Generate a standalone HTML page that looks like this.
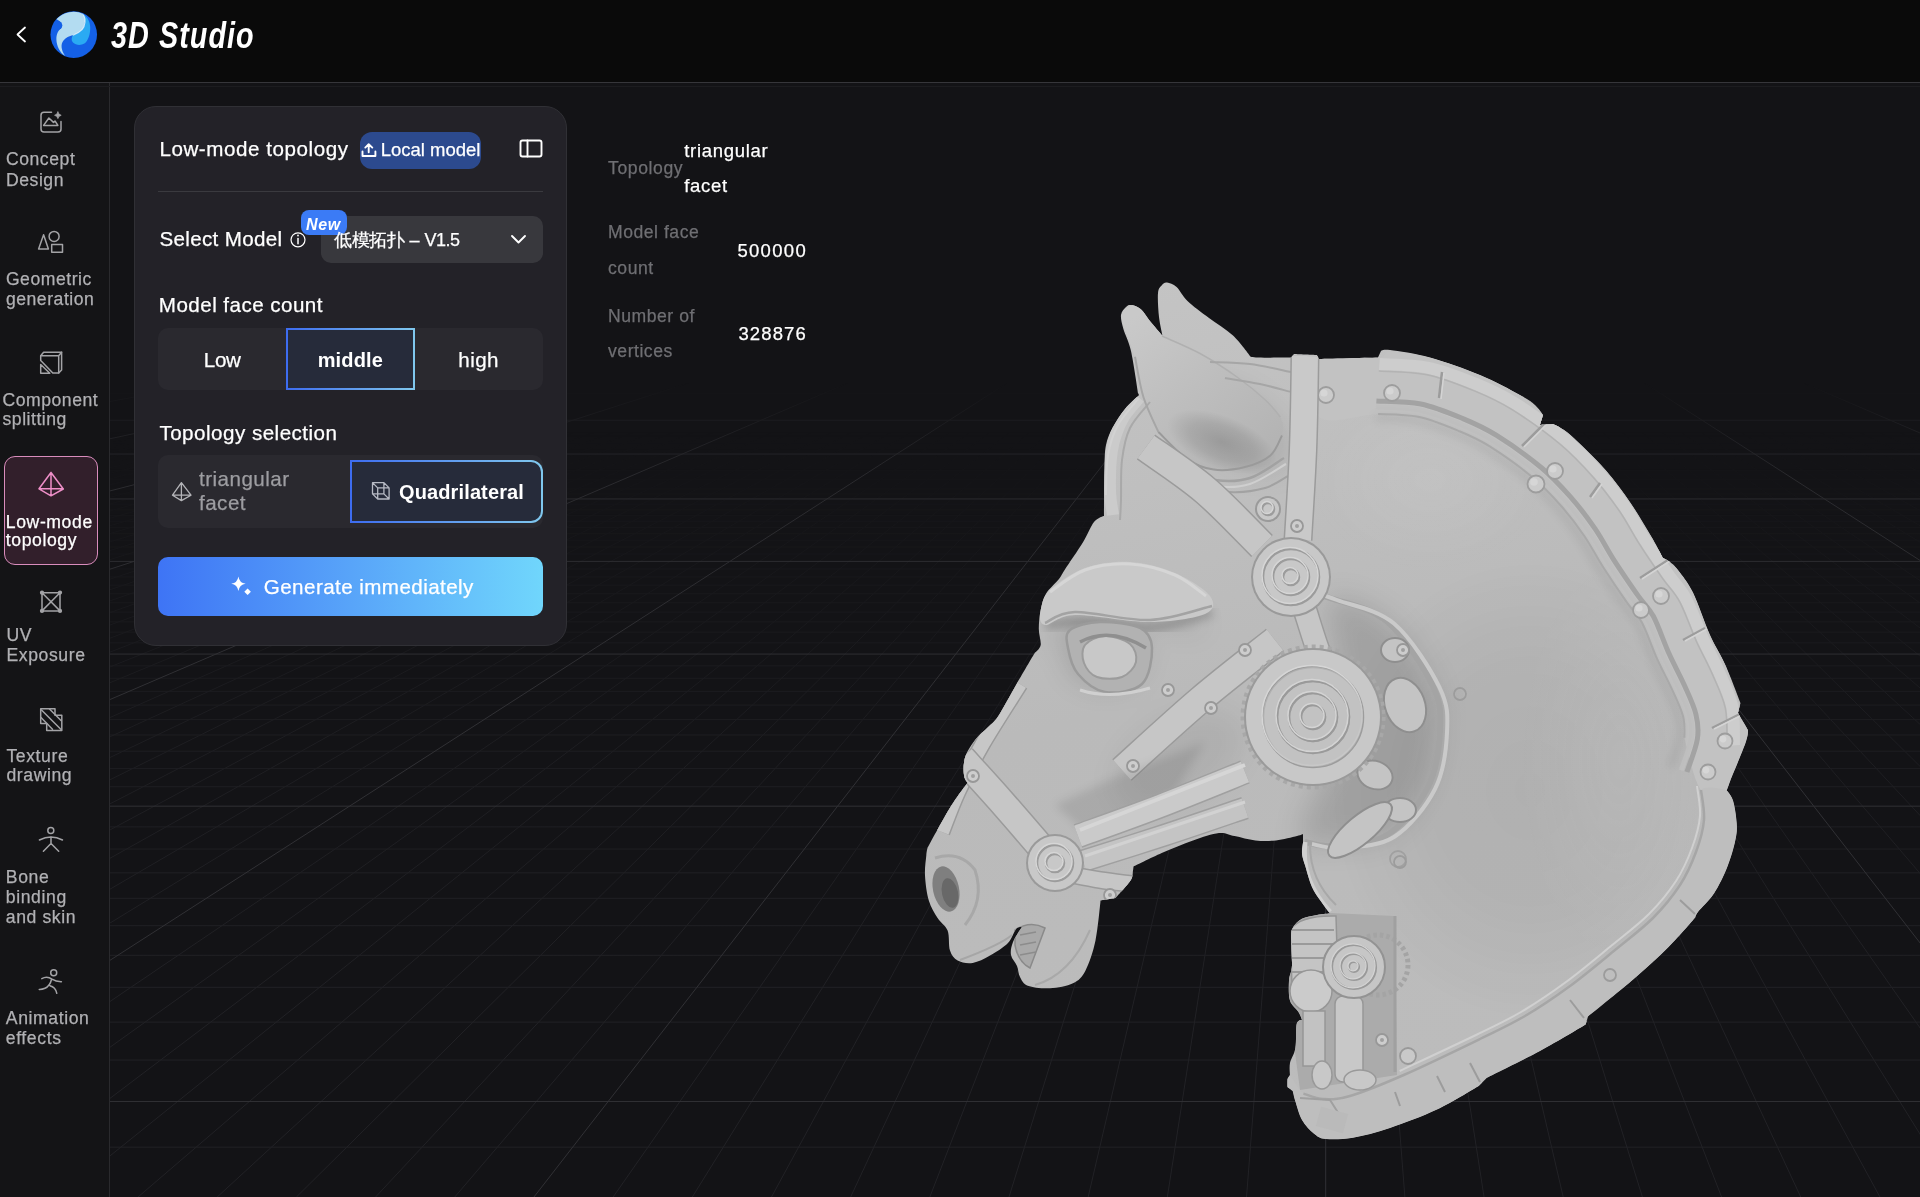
<!DOCTYPE html>
<html><head><meta charset="utf-8">
<style>
html,body{margin:0;padding:0;width:1920px;height:1197px;overflow:hidden;background:#131316;font-family:"Liberation Sans",sans-serif;}
.t{position:absolute;white-space:nowrap;-webkit-text-stroke:0.25px currentColor;}
.abs{position:absolute;}
#hdr{left:0;top:0;width:1920px;height:82px;background:#0a0a0a;border-bottom:1px solid #36363a;}
#side{left:0;top:83px;width:109px;height:1114px;background:#141416;border-right:1px solid #2a2a2d;}
#panel{left:134px;top:106px;width:431px;height:538px;background:#232228;border:1px solid #303035;border-radius:22px;box-sizing:border-box;width:433px;height:540px;}
#div1{left:158px;top:191px;width:385px;height:1px;background:#3a3a3f;}
#pill{left:360px;top:131.5px;width:121px;height:37px;border-radius:12px;background:#2c4a8e;}
#dd{left:321px;top:216px;width:222px;height:47px;border-radius:10px;background:#38383d;}
#newb{left:301px;top:209.5px;width:46px;height:25px;border-radius:8px;background:#3b7bf6;}
#seg{left:158px;top:328px;width:385px;height:62px;border-radius:10px;background:#2a292f;}
#mid{left:286px;top:328px;width:129px;height:62px;box-sizing:border-box;border:2px solid transparent;background:linear-gradient(#262b3a,#262b3a) padding-box,linear-gradient(90deg,#3d6cf0,#80c8ee) border-box;}
#tog{left:158px;top:455px;width:385px;height:73px;border-radius:10px;background:#2a292f;}
#quad{left:350px;top:460px;width:193px;height:63px;box-sizing:border-box;border:2px solid transparent;border-radius:0 12px 12px 0;background:linear-gradient(#262b3a,#262b3a) padding-box,linear-gradient(90deg,#3d6cf0,#80c8ee) border-box;}
#gen{left:158px;top:557px;width:385px;height:59px;border-radius:10px;background:linear-gradient(90deg,#3e74f5 0%,#58a4f9 50%,#70d6fc 100%);}
#act{left:4px;top:456px;width:94px;height:108.5px;box-sizing:border-box;border:1.7px solid #d98cbc;border-radius:11px;background:#321f2b;}
</style></head><body>
<div id="hdr" class="abs"></div>
<div id="side" class="abs"></div>
<div class="abs" style="left:0;top:86px;width:1920px;height:1px;background:#1c1c1f"></div>
<svg width="1920" height="1197" style="position:absolute;left:0;top:0">
<defs>
<linearGradient id="gfmin" x1="0" y1="0" x2="0" y2="1197" gradientUnits="userSpaceOnUse">
<stop offset="0.36" stop-color="#fff" stop-opacity="0"/><stop offset="0.62" stop-color="#fff" stop-opacity="0.75"/><stop offset="0.85" stop-color="#fff" stop-opacity="1"/>
</linearGradient>
<linearGradient id="gfmaj" x1="0" y1="0" x2="0" y2="1197" gradientUnits="userSpaceOnUse">
<stop offset="0.32" stop-color="#fff" stop-opacity="0"/><stop offset="0.40" stop-color="#fff" stop-opacity="0.8"/><stop offset="0.6" stop-color="#fff" stop-opacity="1"/>
</linearGradient>
<mask id="mmin"><rect x="0" y="0" width="1920" height="1197" fill="url(#gfmin)"/></mask>
<mask id="mmaj"><rect x="0" y="0" width="1920" height="1197" fill="url(#gfmaj)"/></mask>
<clipPath id="vclip"><rect x="110" y="83" width="1810" height="1114"/></clipPath>
</defs>
<g clip-path="url(#vclip)">
<g mask="url(#mmin)" stroke="#222226" stroke-width="1"><line x1="110" y1="396.18" x2="1920" y2="396.18"/><line x1="110" y1="398.61" x2="1920" y2="398.61"/><line x1="110" y1="401.10" x2="1920" y2="401.10"/><line x1="110" y1="403.64" x2="1920" y2="403.64"/><line x1="110" y1="406.25" x2="1920" y2="406.25"/><line x1="110" y1="408.91" x2="1920" y2="408.91"/><line x1="110" y1="411.64" x2="1920" y2="411.64"/><line x1="110" y1="414.43" x2="1920" y2="414.43"/><line x1="110" y1="417.29" x2="1920" y2="417.29"/><line x1="110" y1="423.23" x2="1920" y2="423.23"/><line x1="110" y1="426.31" x2="1920" y2="426.31"/><line x1="110" y1="429.47" x2="1920" y2="429.47"/><line x1="110" y1="432.71" x2="1920" y2="432.71"/><line x1="110" y1="436.03" x2="1920" y2="436.03"/><line x1="110" y1="439.45" x2="1920" y2="439.45"/><line x1="110" y1="442.95" x2="1920" y2="442.95"/><line x1="110" y1="446.55" x2="1920" y2="446.55"/><line x1="110" y1="450.26" x2="1920" y2="450.26"/><line x1="110" y1="457.98" x2="1920" y2="457.98"/><line x1="110" y1="462.00" x2="1920" y2="462.00"/><line x1="110" y1="466.15" x2="1920" y2="466.15"/><line x1="110" y1="470.42" x2="1920" y2="470.42"/><line x1="110" y1="474.81" x2="1920" y2="474.81"/><line x1="110" y1="479.35" x2="1920" y2="479.35"/><line x1="110" y1="484.02" x2="1920" y2="484.02"/><line x1="110" y1="488.84" x2="1920" y2="488.84"/><line x1="110" y1="493.82" x2="1920" y2="493.82"/><line x1="110" y1="504.26" x2="1920" y2="504.26"/><line x1="110" y1="509.75" x2="1920" y2="509.75"/><line x1="110" y1="515.43" x2="1920" y2="515.43"/><line x1="110" y1="521.30" x2="1920" y2="521.30"/><line x1="110" y1="527.39" x2="1920" y2="527.39"/><line x1="110" y1="533.69" x2="1920" y2="533.69"/><line x1="110" y1="540.23" x2="1920" y2="540.23"/><line x1="110" y1="547.01" x2="1920" y2="547.01"/><line x1="110" y1="554.06" x2="1920" y2="554.06"/><line x1="110" y1="568.98" x2="1920" y2="568.98"/><line x1="110" y1="576.90" x2="1920" y2="576.90"/><line x1="110" y1="585.15" x2="1920" y2="585.15"/><line x1="110" y1="593.75" x2="1920" y2="593.75"/><line x1="110" y1="602.71" x2="1920" y2="602.71"/><line x1="110" y1="612.08" x2="1920" y2="612.08"/><line x1="110" y1="621.87" x2="1920" y2="621.87"/><line x1="110" y1="632.11" x2="1920" y2="632.11"/><line x1="110" y1="642.83" x2="1920" y2="642.83"/><line x1="110" y1="665.88" x2="1920" y2="665.88"/><line x1="110" y1="678.29" x2="1920" y2="678.29"/><line x1="110" y1="691.35" x2="1920" y2="691.35"/><line x1="110" y1="705.11" x2="1920" y2="705.11"/><line x1="110" y1="719.62" x2="1920" y2="719.62"/><line x1="110" y1="734.97" x2="1920" y2="734.97"/><line x1="110" y1="751.20" x2="1920" y2="751.20"/><line x1="110" y1="768.42" x2="1920" y2="768.42"/><line x1="110" y1="786.70" x2="1920" y2="786.70"/><line x1="110" y1="826.90" x2="1920" y2="826.90"/><line x1="110" y1="849.06" x2="1920" y2="849.06"/><line x1="110" y1="872.80" x2="1920" y2="872.80"/><line x1="110" y1="898.27" x2="1920" y2="898.27"/><line x1="110" y1="925.69" x2="1920" y2="925.69"/><line x1="110" y1="955.28" x2="1920" y2="955.28"/><line x1="110" y1="987.32" x2="1920" y2="987.32"/><line x1="110" y1="1022.11" x2="1920" y2="1022.11"/><line x1="110" y1="1060.04" x2="1920" y2="1060.04"/><line x1="110" y1="1147.14" x2="1920" y2="1147.14"/><line x1="1325.7" y1="178" x2="-8096.28" y2="1197"/><line x1="1325.7" y1="178" x2="-8017.10" y2="1197"/><line x1="1325.7" y1="178" x2="-7937.93" y2="1197"/><line x1="1325.7" y1="178" x2="-7858.75" y2="1197"/><line x1="1325.7" y1="178" x2="-7779.57" y2="1197"/><line x1="1325.7" y1="178" x2="-7700.40" y2="1197"/><line x1="1325.7" y1="178" x2="-7621.22" y2="1197"/><line x1="1325.7" y1="178" x2="-7542.05" y2="1197"/><line x1="1325.7" y1="178" x2="-7462.87" y2="1197"/><line x1="1325.7" y1="178" x2="-7304.52" y2="1197"/><line x1="1325.7" y1="178" x2="-7225.34" y2="1197"/><line x1="1325.7" y1="178" x2="-7146.16" y2="1197"/><line x1="1325.7" y1="178" x2="-7066.99" y2="1197"/><line x1="1325.7" y1="178" x2="-6987.81" y2="1197"/><line x1="1325.7" y1="178" x2="-6908.64" y2="1197"/><line x1="1325.7" y1="178" x2="-6829.46" y2="1197"/><line x1="1325.7" y1="178" x2="-6750.28" y2="1197"/><line x1="1325.7" y1="178" x2="-6671.11" y2="1197"/><line x1="1325.7" y1="178" x2="-6512.75" y2="1197"/><line x1="1325.7" y1="178" x2="-6433.58" y2="1197"/><line x1="1325.7" y1="178" x2="-6354.40" y2="1197"/><line x1="1325.7" y1="178" x2="-6275.22" y2="1197"/><line x1="1325.7" y1="178" x2="-6196.05" y2="1197"/><line x1="1325.7" y1="178" x2="-6116.87" y2="1197"/><line x1="1325.7" y1="178" x2="-6037.70" y2="1197"/><line x1="1325.7" y1="178" x2="-5958.52" y2="1197"/><line x1="1325.7" y1="178" x2="-5879.34" y2="1197"/><line x1="1325.7" y1="178" x2="-5720.99" y2="1197"/><line x1="1325.7" y1="178" x2="-5641.81" y2="1197"/><line x1="1325.7" y1="178" x2="-5562.64" y2="1197"/><line x1="1325.7" y1="178" x2="-5483.46" y2="1197"/><line x1="1325.7" y1="178" x2="-5404.29" y2="1197"/><line x1="1325.7" y1="178" x2="-5325.11" y2="1197"/><line x1="1325.7" y1="178" x2="-5245.93" y2="1197"/><line x1="1325.7" y1="178" x2="-5166.76" y2="1197"/><line x1="1325.7" y1="178" x2="-5087.58" y2="1197"/><line x1="1325.7" y1="178" x2="-4929.23" y2="1197"/><line x1="1325.7" y1="178" x2="-4850.05" y2="1197"/><line x1="1325.7" y1="178" x2="-4770.88" y2="1197"/><line x1="1325.7" y1="178" x2="-4691.70" y2="1197"/><line x1="1325.7" y1="178" x2="-4612.52" y2="1197"/><line x1="1325.7" y1="178" x2="-4533.35" y2="1197"/><line x1="1325.7" y1="178" x2="-4454.17" y2="1197"/><line x1="1325.7" y1="178" x2="-4374.99" y2="1197"/><line x1="1325.7" y1="178" x2="-4295.82" y2="1197"/><line x1="1325.7" y1="178" x2="-4137.46" y2="1197"/><line x1="1325.7" y1="178" x2="-4058.29" y2="1197"/><line x1="1325.7" y1="178" x2="-3979.11" y2="1197"/><line x1="1325.7" y1="178" x2="-3899.94" y2="1197"/><line x1="1325.7" y1="178" x2="-3820.76" y2="1197"/><line x1="1325.7" y1="178" x2="-3741.58" y2="1197"/><line x1="1325.7" y1="178" x2="-3662.41" y2="1197"/><line x1="1325.7" y1="178" x2="-3583.23" y2="1197"/><line x1="1325.7" y1="178" x2="-3504.05" y2="1197"/><line x1="1325.7" y1="178" x2="-3345.70" y2="1197"/><line x1="1325.7" y1="178" x2="-3266.53" y2="1197"/><line x1="1325.7" y1="178" x2="-3187.35" y2="1197"/><line x1="1325.7" y1="178" x2="-3108.17" y2="1197"/><line x1="1325.7" y1="178" x2="-3029.00" y2="1197"/><line x1="1325.7" y1="178" x2="-2949.82" y2="1197"/><line x1="1325.7" y1="178" x2="-2870.64" y2="1197"/><line x1="1325.7" y1="178" x2="-2791.47" y2="1197"/><line x1="1325.7" y1="178" x2="-2712.29" y2="1197"/><line x1="1325.7" y1="178" x2="-2553.94" y2="1197"/><line x1="1325.7" y1="178" x2="-2474.76" y2="1197"/><line x1="1325.7" y1="178" x2="-2395.59" y2="1197"/><line x1="1325.7" y1="178" x2="-2316.41" y2="1197"/><line x1="1325.7" y1="178" x2="-2237.23" y2="1197"/><line x1="1325.7" y1="178" x2="-2158.06" y2="1197"/><line x1="1325.7" y1="178" x2="-2078.88" y2="1197"/><line x1="1325.7" y1="178" x2="-1999.70" y2="1197"/><line x1="1325.7" y1="178" x2="-1920.53" y2="1197"/><line x1="1325.7" y1="178" x2="-1762.18" y2="1197"/><line x1="1325.7" y1="178" x2="-1683.00" y2="1197"/><line x1="1325.7" y1="178" x2="-1603.82" y2="1197"/><line x1="1325.7" y1="178" x2="-1524.65" y2="1197"/><line x1="1325.7" y1="178" x2="-1445.47" y2="1197"/><line x1="1325.7" y1="178" x2="-1366.29" y2="1197"/><line x1="1325.7" y1="178" x2="-1287.12" y2="1197"/><line x1="1325.7" y1="178" x2="-1207.94" y2="1197"/><line x1="1325.7" y1="178" x2="-1128.77" y2="1197"/><line x1="1325.7" y1="178" x2="-970.41" y2="1197"/><line x1="1325.7" y1="178" x2="-891.24" y2="1197"/><line x1="1325.7" y1="178" x2="-812.06" y2="1197"/><line x1="1325.7" y1="178" x2="-732.88" y2="1197"/><line x1="1325.7" y1="178" x2="-653.71" y2="1197"/><line x1="1325.7" y1="178" x2="-574.53" y2="1197"/><line x1="1325.7" y1="178" x2="-495.35" y2="1197"/><line x1="1325.7" y1="178" x2="-416.18" y2="1197"/><line x1="1325.7" y1="178" x2="-337.00" y2="1197"/><line x1="1325.7" y1="178" x2="-178.65" y2="1197"/><line x1="1325.7" y1="178" x2="-99.47" y2="1197"/><line x1="1325.7" y1="178" x2="-20.30" y2="1197"/><line x1="1325.7" y1="178" x2="58.88" y2="1197"/><line x1="1325.7" y1="178" x2="138.06" y2="1197"/><line x1="1325.7" y1="178" x2="217.23" y2="1197"/><line x1="1325.7" y1="178" x2="296.41" y2="1197"/><line x1="1325.7" y1="178" x2="375.58" y2="1197"/><line x1="1325.7" y1="178" x2="454.76" y2="1197"/><line x1="1325.7" y1="178" x2="613.11" y2="1197"/><line x1="1325.7" y1="178" x2="692.29" y2="1197"/><line x1="1325.7" y1="178" x2="771.47" y2="1197"/><line x1="1325.7" y1="178" x2="850.64" y2="1197"/><line x1="1325.7" y1="178" x2="929.82" y2="1197"/><line x1="1325.7" y1="178" x2="1008.99" y2="1197"/><line x1="1325.7" y1="178" x2="1088.17" y2="1197"/><line x1="1325.7" y1="178" x2="1167.35" y2="1197"/><line x1="1325.7" y1="178" x2="1246.52" y2="1197"/><line x1="1325.7" y1="178" x2="1404.88" y2="1197"/><line x1="1325.7" y1="178" x2="1484.05" y2="1197"/><line x1="1325.7" y1="178" x2="1563.23" y2="1197"/><line x1="1325.7" y1="178" x2="1642.41" y2="1197"/><line x1="1325.7" y1="178" x2="1721.58" y2="1197"/><line x1="1325.7" y1="178" x2="1800.76" y2="1197"/><line x1="1325.7" y1="178" x2="1879.93" y2="1197"/><line x1="1325.7" y1="178" x2="1959.11" y2="1197"/><line x1="1325.7" y1="178" x2="2038.29" y2="1197"/><line x1="1325.7" y1="178" x2="2196.64" y2="1197"/><line x1="1325.7" y1="178" x2="2275.82" y2="1197"/><line x1="1325.7" y1="178" x2="2354.99" y2="1197"/><line x1="1325.7" y1="178" x2="2434.17" y2="1197"/><line x1="1325.7" y1="178" x2="2513.34" y2="1197"/><line x1="1325.7" y1="178" x2="2592.52" y2="1197"/><line x1="1325.7" y1="178" x2="2671.70" y2="1197"/><line x1="1325.7" y1="178" x2="2750.87" y2="1197"/><line x1="1325.7" y1="178" x2="2830.05" y2="1197"/><line x1="1325.7" y1="178" x2="2988.40" y2="1197"/><line x1="1325.7" y1="178" x2="3067.58" y2="1197"/><line x1="1325.7" y1="178" x2="3146.75" y2="1197"/><line x1="1325.7" y1="178" x2="3225.93" y2="1197"/><line x1="1325.7" y1="178" x2="3305.11" y2="1197"/><line x1="1325.7" y1="178" x2="3384.28" y2="1197"/><line x1="1325.7" y1="178" x2="3463.46" y2="1197"/><line x1="1325.7" y1="178" x2="3542.64" y2="1197"/><line x1="1325.7" y1="178" x2="3621.81" y2="1197"/><line x1="1325.7" y1="178" x2="3780.17" y2="1197"/><line x1="1325.7" y1="178" x2="3859.34" y2="1197"/><line x1="1325.7" y1="178" x2="3938.52" y2="1197"/><line x1="1325.7" y1="178" x2="4017.69" y2="1197"/><line x1="1325.7" y1="178" x2="4096.87" y2="1197"/><line x1="1325.7" y1="178" x2="4176.05" y2="1197"/><line x1="1325.7" y1="178" x2="4255.22" y2="1197"/><line x1="1325.7" y1="178" x2="4334.40" y2="1197"/><line x1="1325.7" y1="178" x2="4413.58" y2="1197"/><line x1="1325.7" y1="178" x2="4571.93" y2="1197"/><line x1="1325.7" y1="178" x2="4651.10" y2="1197"/><line x1="1325.7" y1="178" x2="4730.28" y2="1197"/><line x1="1325.7" y1="178" x2="4809.46" y2="1197"/><line x1="1325.7" y1="178" x2="4888.63" y2="1197"/><line x1="1325.7" y1="178" x2="4967.81" y2="1197"/><line x1="1325.7" y1="178" x2="5046.99" y2="1197"/><line x1="1325.7" y1="178" x2="5126.16" y2="1197"/><line x1="1325.7" y1="178" x2="5205.34" y2="1197"/><line x1="1325.7" y1="178" x2="5363.69" y2="1197"/><line x1="1325.7" y1="178" x2="5442.87" y2="1197"/><line x1="1325.7" y1="178" x2="5522.04" y2="1197"/><line x1="1325.7" y1="178" x2="5601.22" y2="1197"/><line x1="1325.7" y1="178" x2="5680.40" y2="1197"/><line x1="1325.7" y1="178" x2="5759.57" y2="1197"/><line x1="1325.7" y1="178" x2="5838.75" y2="1197"/><line x1="1325.7" y1="178" x2="5917.93" y2="1197"/><line x1="1325.7" y1="178" x2="5997.10" y2="1197"/><line x1="1325.7" y1="178" x2="6155.45" y2="1197"/><line x1="1325.7" y1="178" x2="6234.63" y2="1197"/><line x1="1325.7" y1="178" x2="6313.81" y2="1197"/><line x1="1325.7" y1="178" x2="6392.98" y2="1197"/><line x1="1325.7" y1="178" x2="6472.16" y2="1197"/><line x1="1325.7" y1="178" x2="6551.34" y2="1197"/><line x1="1325.7" y1="178" x2="6630.51" y2="1197"/><line x1="1325.7" y1="178" x2="6709.69" y2="1197"/><line x1="1325.7" y1="178" x2="6788.86" y2="1197"/><line x1="1325.7" y1="178" x2="6947.22" y2="1197"/><line x1="1325.7" y1="178" x2="7026.39" y2="1197"/><line x1="1325.7" y1="178" x2="7105.57" y2="1197"/><line x1="1325.7" y1="178" x2="7184.75" y2="1197"/><line x1="1325.7" y1="178" x2="7263.92" y2="1197"/><line x1="1325.7" y1="178" x2="7343.10" y2="1197"/><line x1="1325.7" y1="178" x2="7422.28" y2="1197"/><line x1="1325.7" y1="178" x2="7501.45" y2="1197"/><line x1="1325.7" y1="178" x2="7580.63" y2="1197"/><line x1="1325.7" y1="178" x2="7738.98" y2="1197"/><line x1="1325.7" y1="178" x2="7818.16" y2="1197"/><line x1="1325.7" y1="178" x2="7897.33" y2="1197"/><line x1="1325.7" y1="178" x2="7976.51" y2="1197"/><line x1="1325.7" y1="178" x2="8055.69" y2="1197"/><line x1="1325.7" y1="178" x2="8134.86" y2="1197"/><line x1="1325.7" y1="178" x2="8214.04" y2="1197"/><line x1="1325.7" y1="178" x2="8293.21" y2="1197"/><line x1="1325.7" y1="178" x2="8372.39" y2="1197"/><line x1="1325.7" y1="178" x2="8530.74" y2="1197"/><line x1="1325.7" y1="178" x2="8609.92" y2="1197"/><line x1="1325.7" y1="178" x2="8689.10" y2="1197"/><line x1="1325.7" y1="178" x2="8768.27" y2="1197"/><line x1="1325.7" y1="178" x2="8847.45" y2="1197"/><line x1="1325.7" y1="178" x2="8926.62" y2="1197"/><line x1="1325.7" y1="178" x2="9005.80" y2="1197"/><line x1="1325.7" y1="178" x2="9084.98" y2="1197"/><line x1="1325.7" y1="178" x2="9164.15" y2="1197"/><line x1="1325.7" y1="178" x2="9322.51" y2="1197"/><line x1="1325.7" y1="178" x2="9401.68" y2="1197"/><line x1="1325.7" y1="178" x2="9480.86" y2="1197"/><line x1="1325.7" y1="178" x2="9560.04" y2="1197"/><line x1="1325.7" y1="178" x2="9639.21" y2="1197"/><line x1="1325.7" y1="178" x2="9718.39" y2="1197"/><line x1="1325.7" y1="178" x2="9797.56" y2="1197"/><line x1="1325.7" y1="178" x2="9876.74" y2="1197"/><line x1="1325.7" y1="178" x2="9955.92" y2="1197"/><line x1="1325.7" y1="178" x2="10114.27" y2="1197"/><line x1="1325.7" y1="178" x2="10193.45" y2="1197"/><line x1="1325.7" y1="178" x2="10272.62" y2="1197"/><line x1="1325.7" y1="178" x2="10351.80" y2="1197"/><line x1="1325.7" y1="178" x2="10430.97" y2="1197"/><line x1="1325.7" y1="178" x2="10510.15" y2="1197"/><line x1="1325.7" y1="178" x2="10589.33" y2="1197"/><line x1="1325.7" y1="178" x2="10668.50" y2="1197"/><line x1="1325.7" y1="178" x2="10747.68" y2="1197"/></g><g mask="url(#mmaj)" stroke="#313135" stroke-width="1"><line x1="110" y1="393.80" x2="1920" y2="393.80"/><line x1="110" y1="420.22" x2="1920" y2="420.22"/><line x1="110" y1="454.06" x2="1920" y2="454.06"/><line x1="110" y1="498.95" x2="1920" y2="498.95"/><line x1="110" y1="561.38" x2="1920" y2="561.38"/><line x1="110" y1="654.08" x2="1920" y2="654.08"/><line x1="110" y1="806.16" x2="1920" y2="806.16"/><line x1="110" y1="1101.54" x2="1920" y2="1101.54"/><line x1="1325.7" y1="178" x2="-8175.46" y2="1197"/><line x1="1325.7" y1="178" x2="-7383.69" y2="1197"/><line x1="1325.7" y1="178" x2="-6591.93" y2="1197"/><line x1="1325.7" y1="178" x2="-5800.17" y2="1197"/><line x1="1325.7" y1="178" x2="-5008.40" y2="1197"/><line x1="1325.7" y1="178" x2="-4216.64" y2="1197"/><line x1="1325.7" y1="178" x2="-3424.88" y2="1197"/><line x1="1325.7" y1="178" x2="-2633.11" y2="1197"/><line x1="1325.7" y1="178" x2="-1841.35" y2="1197"/><line x1="1325.7" y1="178" x2="-1049.59" y2="1197"/><line x1="1325.7" y1="178" x2="-257.83" y2="1197"/><line x1="1325.7" y1="178" x2="533.94" y2="1197"/><line x1="1325.7" y1="178" x2="1325.70" y2="1197"/><line x1="1325.7" y1="178" x2="2117.46" y2="1197"/><line x1="1325.7" y1="178" x2="2909.23" y2="1197"/><line x1="1325.7" y1="178" x2="3700.99" y2="1197"/><line x1="1325.7" y1="178" x2="4492.75" y2="1197"/><line x1="1325.7" y1="178" x2="5284.52" y2="1197"/><line x1="1325.7" y1="178" x2="6076.28" y2="1197"/><line x1="1325.7" y1="178" x2="6868.04" y2="1197"/><line x1="1325.7" y1="178" x2="7659.80" y2="1197"/><line x1="1325.7" y1="178" x2="8451.57" y2="1197"/><line x1="1325.7" y1="178" x2="9243.33" y2="1197"/><line x1="1325.7" y1="178" x2="10035.09" y2="1197"/><line x1="1325.7" y1="178" x2="10826.86" y2="1197"/></g>
</g>
</svg>
<svg width="1920" height="1197" style="position:absolute;left:0;top:0">
<defs>
<clipPath id="hclip"><path d="M1121.0,315.0 C1121.4,311.3 1124.3,308.7 1126.0,307.0 C1127.7,305.3 1128.6,304.7 1131.0,305.0 C1133.4,305.3 1137.2,306.0 1140.6,309.0 C1144.0,312.0 1147.9,318.6 1151.6,323.0 C1155.2,327.4 1162.5,335.6 1162.5,335.6 C1162.5,335.6 1159.8,324.1 1159.0,317.0 C1158.2,309.9 1157.5,298.3 1158.0,293.0 C1158.5,287.7 1160.5,286.8 1162.0,285.0 C1163.5,283.2 1164.6,282.2 1167.0,282.5 C1169.4,282.8 1173.2,283.9 1176.6,287.0 C1180.0,290.1 1182.1,295.8 1187.5,301.0 C1192.9,306.2 1201.4,312.2 1209.0,318.0 C1216.6,323.8 1226.2,329.3 1233.0,335.6 C1239.8,341.9 1250.0,356.0 1250.0,356.0 C1250.0,356.0 1249.2,357.2 1256.0,357.5 C1262.8,357.8 1291.0,357.5 1291.0,357.5 C1291.0,357.5 1294.0,354.0 1294.0,354.0 C1294.0,354.0 1317.0,355.0 1317.0,355.0 C1317.0,355.0 1319.0,359.0 1319.0,359.0 C1319.0,359.0 1378.0,357.5 1378.0,357.5 C1378.0,357.5 1381.0,351.0 1381.0,351.0 C1381.0,351.0 1381.8,348.9 1390.0,350.0 C1398.2,351.1 1415.0,353.3 1430.0,357.5 C1445.0,361.7 1465.0,368.8 1480.0,375.0 C1495.0,381.2 1510.8,390.0 1520.0,395.0 C1529.2,400.0 1531.2,401.7 1535.0,405.0 C1538.8,408.3 1543.0,415.0 1543.0,415.0 C1543.0,415.0 1540.0,425.0 1540.0,425.0 C1540.0,425.0 1553.0,424.0 1553.0,424.0 C1553.0,424.0 1561.7,427.3 1570.5,435.0 C1579.3,442.7 1595.6,458.7 1605.6,470.0 C1615.6,481.3 1623.1,492.1 1630.6,503.0 C1638.1,513.9 1645.3,526.3 1650.7,535.5 C1656.1,544.7 1663.0,558.0 1663.0,558.0 C1663.0,558.0 1667.5,560.0 1670.0,562.0 C1672.5,564.0 1674.2,564.9 1678.0,570.0 C1681.8,575.1 1687.7,581.8 1693.0,592.6 C1698.3,603.4 1704.6,622.9 1710.0,635.0 C1715.4,647.1 1720.3,653.7 1725.4,665.0 C1730.5,676.3 1740.5,703.0 1740.5,703.0 C1740.5,703.0 1738.0,713.0 1738.0,713.0 C1738.0,713.0 1748.0,730.0 1748.0,730.0 C1748.0,730.0 1748.4,734.6 1745.5,743.0 C1742.6,751.4 1733.5,772.6 1730.4,780.5 C1727.3,788.4 1726.7,790.6 1726.7,790.6 C1726.7,790.6 1731.3,795.2 1733.0,800.6 C1734.7,806.0 1736.3,816.4 1736.7,823.0 C1737.1,829.6 1737.0,832.7 1735.4,840.0 C1733.9,847.3 1731.0,857.8 1727.4,866.7 C1723.8,875.6 1718.9,886.0 1714.0,893.5 C1709.1,901.0 1701.1,908.0 1698.0,912.0 C1694.9,916.0 1695.3,917.5 1695.3,917.5 C1695.3,917.5 1678.8,936.8 1668.6,947.0 C1658.3,957.2 1647.2,967.4 1633.8,979.0 C1620.4,990.6 1588.0,1016.5 1588.0,1016.5 C1588.0,1016.5 1585.7,1024.5 1585.7,1024.5 C1585.7,1024.5 1556.5,1042.1 1540.0,1051.0 C1523.5,1059.9 1486.7,1078.0 1486.7,1078.0 C1486.7,1078.0 1478.7,1086.0 1478.7,1086.0 C1478.7,1086.0 1451.8,1102.6 1437.0,1109.6 C1422.2,1116.6 1404.0,1123.3 1390.0,1128.0 C1376.0,1132.7 1363.7,1135.9 1353.0,1137.7 C1342.3,1139.5 1332.5,1139.7 1326.0,1139.0 C1319.5,1138.3 1318.0,1136.9 1314.0,1133.7 C1310.0,1130.5 1305.1,1125.3 1302.0,1120.0 C1298.9,1114.7 1297.0,1106.4 1295.4,1101.6 C1293.9,1096.8 1292.7,1091.0 1292.7,1091.0 C1292.7,1091.0 1287.4,1087.0 1287.4,1087.0 C1287.4,1087.0 1287.4,1079.0 1287.4,1079.0 C1287.4,1079.0 1290.0,1075.0 1290.0,1075.0 C1290.0,1075.0 1289.1,1067.5 1290.0,1063.0 C1290.9,1058.5 1294.3,1054.5 1295.4,1048.0 C1296.5,1041.5 1295.6,1028.7 1296.7,1024.0 C1297.8,1019.3 1302.0,1020.0 1302.0,1020.0 C1302.0,1020.0 1300.5,1015.2 1298.5,1012.0 C1296.5,1008.8 1291.6,1005.9 1290.0,1000.6 C1288.4,995.4 1288.7,986.4 1289.0,980.5 C1289.3,974.6 1291.7,972.8 1292.0,965.5 C1292.3,958.2 1290.8,943.4 1291.0,937.0 C1291.2,930.6 1291.6,930.0 1293.4,927.0 C1295.2,924.0 1298.1,920.7 1302.0,918.7 C1305.9,916.7 1312.3,915.9 1317.0,915.0 C1321.7,914.1 1330.0,913.6 1330.0,913.6 C1330.0,913.6 1323.0,904.4 1320.0,900.0 C1317.0,895.6 1314.5,892.8 1312.0,887.0 C1309.5,881.2 1306.7,870.6 1305.0,865.0 C1303.3,859.4 1302.3,857.1 1302.0,853.4 C1301.7,849.6 1303.0,842.5 1303.0,842.5 C1303.0,842.5 1303.0,834.0 1303.0,834.0 C1303.0,834.0 1301.5,834.9 1297.0,836.0 C1292.5,837.1 1282.9,839.7 1276.0,840.4 C1269.1,841.1 1262.3,841.1 1255.4,840.4 C1248.5,839.7 1240.7,837.2 1234.6,836.0 C1228.5,834.8 1225.9,832.3 1219.0,833.0 C1212.1,833.7 1202.5,837.1 1193.0,840.4 C1183.5,843.7 1171.6,848.6 1161.7,853.0 C1151.8,857.4 1133.5,866.5 1133.5,866.5 C1133.5,866.5 1133.5,868.1 1133.0,870.4 C1132.5,872.7 1133.4,875.9 1130.5,880.5 C1127.6,885.1 1115.5,898.0 1115.5,898.0 C1115.5,898.0 1100.5,900.5 1100.5,900.5 C1100.5,900.5 1098.0,928.9 1095.5,940.6 C1093.0,952.3 1089.2,963.6 1085.4,970.7 C1081.7,977.8 1078.9,980.3 1073.0,983.2 C1067.1,986.1 1057.5,987.8 1050.0,988.2 C1042.5,988.6 1032.8,987.6 1027.8,985.7 C1022.8,983.8 1021.8,980.3 1020.0,977.0 C1018.2,973.7 1018.5,969.7 1017.0,966.0 C1015.5,962.3 1011.7,959.0 1011.0,955.0 C1010.3,951.0 1011.2,946.7 1013.0,942.0 C1014.8,937.3 1022.0,927.0 1022.0,927.0 C1022.0,927.0 1018.3,926.3 1016.0,929.0 C1013.7,931.7 1012.3,938.6 1008.0,943.0 C1003.7,947.4 995.9,952.3 990.0,955.6 C984.1,958.9 978.1,962.2 972.7,963.0 C967.3,963.8 961.4,962.7 957.6,960.6 C953.8,958.5 951.7,955.6 950.0,950.6 C948.3,945.6 949.7,936.0 947.6,930.6 C945.5,925.2 940.7,923.0 937.6,918.0 C934.5,913.0 930.9,907.6 928.8,900.5 C926.7,893.4 925.4,882.9 925.0,875.4 C924.6,867.9 925.9,860.0 926.3,855.4 C926.7,850.8 927.5,848.0 927.5,848.0 C927.5,848.0 943.3,818.7 950.0,807.8 C956.7,796.9 967.6,782.7 967.6,782.7 C967.6,782.7 964.4,779.2 964.0,775.0 C963.6,770.8 963.2,763.4 965.0,757.6 C966.8,751.8 971.2,745.0 975.0,740.0 C978.8,735.0 983.8,731.6 987.7,727.6 C991.6,723.6 993.5,723.3 998.4,716.0 C1003.2,708.7 1010.7,694.4 1016.8,683.8 C1022.9,673.2 1035.0,652.6 1035.0,652.6 C1035.0,652.6 1040.1,649.0 1040.7,645.0 C1041.3,641.0 1038.8,634.5 1038.8,628.7 C1038.8,622.9 1039.5,615.8 1040.7,610.0 C1041.9,604.2 1043.0,598.9 1046.0,593.8 C1049.0,588.6 1055.9,583.0 1059.0,579.0 C1062.1,575.0 1060.6,576.1 1064.6,570.0 C1068.6,563.9 1078.1,550.3 1083.0,542.3 C1087.9,534.3 1090.5,526.4 1094.0,522.0 C1097.5,517.6 1104.0,516.0 1104.0,516.0 C1104.0,516.0 1103.9,513.0 1104.0,505.0 C1104.1,496.9 1104.2,477.7 1104.5,467.7 C1104.8,457.7 1104.6,451.7 1106.0,445.0 C1107.4,438.3 1109.5,433.6 1112.7,427.6 C1115.9,421.6 1120.6,414.4 1125.0,409.0 C1129.4,403.6 1139.0,395.0 1139.0,395.0 C1139.0,395.0 1138.0,393.0 1138.0,393.0 C1138.0,393.0 1133.4,361.7 1131.0,351.0 C1128.6,340.3 1125.1,335.0 1123.4,329.0 C1121.7,323.0 1120.6,318.7 1121.0,315.0 Z"/></clipPath>
<filter id="hblur" x="-20%" y="-20%" width="140%" height="140%"><feGaussianBlur stdDeviation="14"/></filter><filter id="sblur" x="-20%" y="-20%" width="140%" height="140%"><feGaussianBlur stdDeviation="4"/></filter>
<radialGradient id="rdark"><stop offset="0" stop-color="#000" stop-opacity="0.055"/><stop offset="0.55" stop-color="#000" stop-opacity="0.04"/><stop offset="1" stop-color="#000" stop-opacity="0"/></radialGradient>
<radialGradient id="rlight"><stop offset="0" stop-color="#fff" stop-opacity="0.07"/><stop offset="1" stop-color="#fff" stop-opacity="0"/></radialGradient>
<radialGradient id="rlight2"><stop offset="0" stop-color="#fff" stop-opacity="0.05"/><stop offset="1" stop-color="#fff" stop-opacity="0"/></radialGradient>
<linearGradient id="earg" x1="1130" y1="320" x2="1250" y2="460" gradientUnits="userSpaceOnUse"><stop offset="0" stop-color="#c9c9c9"/><stop offset="0.55" stop-color="#bdbdbd"/><stop offset="1" stop-color="#b4b4b4"/></linearGradient>
<radialGradient id="eardark"><stop offset="0" stop-color="#000" stop-opacity="0.16"/><stop offset="0.6" stop-color="#000" stop-opacity="0.09"/><stop offset="1" stop-color="#000" stop-opacity="0"/></radialGradient>
<linearGradient id="hbase" x1="1100" y1="280" x2="1300" y2="1100" gradientUnits="userSpaceOnUse">
<stop offset="0" stop-color="#c4c4c4"/><stop offset="0.5" stop-color="#bababa"/><stop offset="1" stop-color="#bcbcbc"/>
</linearGradient>
</defs>
<path fill="url(#hbase)" d="M1121.0,315.0 C1121.4,311.3 1124.3,308.7 1126.0,307.0 C1127.7,305.3 1128.6,304.7 1131.0,305.0 C1133.4,305.3 1137.2,306.0 1140.6,309.0 C1144.0,312.0 1147.9,318.6 1151.6,323.0 C1155.2,327.4 1162.5,335.6 1162.5,335.6 C1162.5,335.6 1159.8,324.1 1159.0,317.0 C1158.2,309.9 1157.5,298.3 1158.0,293.0 C1158.5,287.7 1160.5,286.8 1162.0,285.0 C1163.5,283.2 1164.6,282.2 1167.0,282.5 C1169.4,282.8 1173.2,283.9 1176.6,287.0 C1180.0,290.1 1182.1,295.8 1187.5,301.0 C1192.9,306.2 1201.4,312.2 1209.0,318.0 C1216.6,323.8 1226.2,329.3 1233.0,335.6 C1239.8,341.9 1250.0,356.0 1250.0,356.0 C1250.0,356.0 1249.2,357.2 1256.0,357.5 C1262.8,357.8 1291.0,357.5 1291.0,357.5 C1291.0,357.5 1294.0,354.0 1294.0,354.0 C1294.0,354.0 1317.0,355.0 1317.0,355.0 C1317.0,355.0 1319.0,359.0 1319.0,359.0 C1319.0,359.0 1378.0,357.5 1378.0,357.5 C1378.0,357.5 1381.0,351.0 1381.0,351.0 C1381.0,351.0 1381.8,348.9 1390.0,350.0 C1398.2,351.1 1415.0,353.3 1430.0,357.5 C1445.0,361.7 1465.0,368.8 1480.0,375.0 C1495.0,381.2 1510.8,390.0 1520.0,395.0 C1529.2,400.0 1531.2,401.7 1535.0,405.0 C1538.8,408.3 1543.0,415.0 1543.0,415.0 C1543.0,415.0 1540.0,425.0 1540.0,425.0 C1540.0,425.0 1553.0,424.0 1553.0,424.0 C1553.0,424.0 1561.7,427.3 1570.5,435.0 C1579.3,442.7 1595.6,458.7 1605.6,470.0 C1615.6,481.3 1623.1,492.1 1630.6,503.0 C1638.1,513.9 1645.3,526.3 1650.7,535.5 C1656.1,544.7 1663.0,558.0 1663.0,558.0 C1663.0,558.0 1667.5,560.0 1670.0,562.0 C1672.5,564.0 1674.2,564.9 1678.0,570.0 C1681.8,575.1 1687.7,581.8 1693.0,592.6 C1698.3,603.4 1704.6,622.9 1710.0,635.0 C1715.4,647.1 1720.3,653.7 1725.4,665.0 C1730.5,676.3 1740.5,703.0 1740.5,703.0 C1740.5,703.0 1738.0,713.0 1738.0,713.0 C1738.0,713.0 1748.0,730.0 1748.0,730.0 C1748.0,730.0 1748.4,734.6 1745.5,743.0 C1742.6,751.4 1733.5,772.6 1730.4,780.5 C1727.3,788.4 1726.7,790.6 1726.7,790.6 C1726.7,790.6 1731.3,795.2 1733.0,800.6 C1734.7,806.0 1736.3,816.4 1736.7,823.0 C1737.1,829.6 1737.0,832.7 1735.4,840.0 C1733.9,847.3 1731.0,857.8 1727.4,866.7 C1723.8,875.6 1718.9,886.0 1714.0,893.5 C1709.1,901.0 1701.1,908.0 1698.0,912.0 C1694.9,916.0 1695.3,917.5 1695.3,917.5 C1695.3,917.5 1678.8,936.8 1668.6,947.0 C1658.3,957.2 1647.2,967.4 1633.8,979.0 C1620.4,990.6 1588.0,1016.5 1588.0,1016.5 C1588.0,1016.5 1585.7,1024.5 1585.7,1024.5 C1585.7,1024.5 1556.5,1042.1 1540.0,1051.0 C1523.5,1059.9 1486.7,1078.0 1486.7,1078.0 C1486.7,1078.0 1478.7,1086.0 1478.7,1086.0 C1478.7,1086.0 1451.8,1102.6 1437.0,1109.6 C1422.2,1116.6 1404.0,1123.3 1390.0,1128.0 C1376.0,1132.7 1363.7,1135.9 1353.0,1137.7 C1342.3,1139.5 1332.5,1139.7 1326.0,1139.0 C1319.5,1138.3 1318.0,1136.9 1314.0,1133.7 C1310.0,1130.5 1305.1,1125.3 1302.0,1120.0 C1298.9,1114.7 1297.0,1106.4 1295.4,1101.6 C1293.9,1096.8 1292.7,1091.0 1292.7,1091.0 C1292.7,1091.0 1287.4,1087.0 1287.4,1087.0 C1287.4,1087.0 1287.4,1079.0 1287.4,1079.0 C1287.4,1079.0 1290.0,1075.0 1290.0,1075.0 C1290.0,1075.0 1289.1,1067.5 1290.0,1063.0 C1290.9,1058.5 1294.3,1054.5 1295.4,1048.0 C1296.5,1041.5 1295.6,1028.7 1296.7,1024.0 C1297.8,1019.3 1302.0,1020.0 1302.0,1020.0 C1302.0,1020.0 1300.5,1015.2 1298.5,1012.0 C1296.5,1008.8 1291.6,1005.9 1290.0,1000.6 C1288.4,995.4 1288.7,986.4 1289.0,980.5 C1289.3,974.6 1291.7,972.8 1292.0,965.5 C1292.3,958.2 1290.8,943.4 1291.0,937.0 C1291.2,930.6 1291.6,930.0 1293.4,927.0 C1295.2,924.0 1298.1,920.7 1302.0,918.7 C1305.9,916.7 1312.3,915.9 1317.0,915.0 C1321.7,914.1 1330.0,913.6 1330.0,913.6 C1330.0,913.6 1323.0,904.4 1320.0,900.0 C1317.0,895.6 1314.5,892.8 1312.0,887.0 C1309.5,881.2 1306.7,870.6 1305.0,865.0 C1303.3,859.4 1302.3,857.1 1302.0,853.4 C1301.7,849.6 1303.0,842.5 1303.0,842.5 C1303.0,842.5 1303.0,834.0 1303.0,834.0 C1303.0,834.0 1301.5,834.9 1297.0,836.0 C1292.5,837.1 1282.9,839.7 1276.0,840.4 C1269.1,841.1 1262.3,841.1 1255.4,840.4 C1248.5,839.7 1240.7,837.2 1234.6,836.0 C1228.5,834.8 1225.9,832.3 1219.0,833.0 C1212.1,833.7 1202.5,837.1 1193.0,840.4 C1183.5,843.7 1171.6,848.6 1161.7,853.0 C1151.8,857.4 1133.5,866.5 1133.5,866.5 C1133.5,866.5 1133.5,868.1 1133.0,870.4 C1132.5,872.7 1133.4,875.9 1130.5,880.5 C1127.6,885.1 1115.5,898.0 1115.5,898.0 C1115.5,898.0 1100.5,900.5 1100.5,900.5 C1100.5,900.5 1098.0,928.9 1095.5,940.6 C1093.0,952.3 1089.2,963.6 1085.4,970.7 C1081.7,977.8 1078.9,980.3 1073.0,983.2 C1067.1,986.1 1057.5,987.8 1050.0,988.2 C1042.5,988.6 1032.8,987.6 1027.8,985.7 C1022.8,983.8 1021.8,980.3 1020.0,977.0 C1018.2,973.7 1018.5,969.7 1017.0,966.0 C1015.5,962.3 1011.7,959.0 1011.0,955.0 C1010.3,951.0 1011.2,946.7 1013.0,942.0 C1014.8,937.3 1022.0,927.0 1022.0,927.0 C1022.0,927.0 1018.3,926.3 1016.0,929.0 C1013.7,931.7 1012.3,938.6 1008.0,943.0 C1003.7,947.4 995.9,952.3 990.0,955.6 C984.1,958.9 978.1,962.2 972.7,963.0 C967.3,963.8 961.4,962.7 957.6,960.6 C953.8,958.5 951.7,955.6 950.0,950.6 C948.3,945.6 949.7,936.0 947.6,930.6 C945.5,925.2 940.7,923.0 937.6,918.0 C934.5,913.0 930.9,907.6 928.8,900.5 C926.7,893.4 925.4,882.9 925.0,875.4 C924.6,867.9 925.9,860.0 926.3,855.4 C926.7,850.8 927.5,848.0 927.5,848.0 C927.5,848.0 943.3,818.7 950.0,807.8 C956.7,796.9 967.6,782.7 967.6,782.7 C967.6,782.7 964.4,779.2 964.0,775.0 C963.6,770.8 963.2,763.4 965.0,757.6 C966.8,751.8 971.2,745.0 975.0,740.0 C978.8,735.0 983.8,731.6 987.7,727.6 C991.6,723.6 993.5,723.3 998.4,716.0 C1003.2,708.7 1010.7,694.4 1016.8,683.8 C1022.9,673.2 1035.0,652.6 1035.0,652.6 C1035.0,652.6 1040.1,649.0 1040.7,645.0 C1041.3,641.0 1038.8,634.5 1038.8,628.7 C1038.8,622.9 1039.5,615.8 1040.7,610.0 C1041.9,604.2 1043.0,598.9 1046.0,593.8 C1049.0,588.6 1055.9,583.0 1059.0,579.0 C1062.1,575.0 1060.6,576.1 1064.6,570.0 C1068.6,563.9 1078.1,550.3 1083.0,542.3 C1087.9,534.3 1090.5,526.4 1094.0,522.0 C1097.5,517.6 1104.0,516.0 1104.0,516.0 C1104.0,516.0 1103.9,513.0 1104.0,505.0 C1104.1,496.9 1104.2,477.7 1104.5,467.7 C1104.8,457.7 1104.6,451.7 1106.0,445.0 C1107.4,438.3 1109.5,433.6 1112.7,427.6 C1115.9,421.6 1120.6,414.4 1125.0,409.0 C1129.4,403.6 1139.0,395.0 1139.0,395.0 C1139.0,395.0 1138.0,393.0 1138.0,393.0 C1138.0,393.0 1133.4,361.7 1131.0,351.0 C1128.6,340.3 1125.1,335.0 1123.4,329.0 C1121.7,323.0 1120.6,318.7 1121.0,315.0 Z"/>
<g clip-path="url(#hclip)">
<g filter="url(#hblur)">

<path d="M1330.0,600.0 C1338.3,590.3 1373.0,607.7 1390.0,622.0 C1407.0,636.3 1424.0,667.8 1432.0,686.0 C1440.0,704.2 1438.8,714.2 1438.0,731.0 C1437.2,747.8 1435.5,769.7 1427.0,787.0 C1418.5,804.3 1402.5,825.7 1387.0,835.0 C1371.5,844.3 1348.5,842.8 1334.0,843.0 C1319.5,843.2 1300.7,849.8 1300.0,836.0 C1299.3,822.2 1323.3,786.0 1330.0,760.0 C1336.7,734.0 1340.0,706.7 1340.0,680.0 C1340.0,653.3 1321.7,609.7 1330.0,600.0 Z" fill="#000" opacity="0.13"/>
<ellipse cx="1238" cy="428" rx="60" ry="34" fill="#000" opacity="0.09" transform="rotate(35 1238 428)"/>
<ellipse cx="1105" cy="655" rx="38" ry="30" fill="#000" opacity="0.14"/>
<path d="M1050,640 Q1110,600 1200,625" stroke="#000" stroke-width="14" fill="none" opacity="0.10"/>
<ellipse cx="1180" cy="760" rx="70" ry="40" fill="#000" opacity="0.06" transform="rotate(-30 1180 760)"/>
</g>
<ellipse cx="1530" cy="790" rx="200" ry="230" fill="url(#rdark)"/>
<ellipse cx="1430" cy="480" rx="120" ry="90" fill="url(#rlight)"/>
<ellipse cx="1620" cy="760" rx="100" ry="200" fill="url(#rlight2)"/>
<path d="M1319.0,359.0 C1328.8,349.1 1366.2,358.7 1378.0,357.5 C1389.8,356.3 1381.3,352.0 1390.0,352.0 C1398.7,352.0 1415.0,353.7 1430.0,357.5 C1445.0,361.3 1465.0,368.8 1480.0,375.0 C1495.0,381.2 1508.7,387.8 1520.0,395.0 C1531.3,402.2 1539.6,411.3 1548.0,418.0 C1556.4,424.7 1560.9,426.3 1570.5,435.0 C1580.1,443.7 1595.6,458.7 1605.6,470.0 C1615.6,481.3 1623.1,492.1 1630.6,503.0 C1638.1,513.9 1644.1,525.7 1650.7,535.5 C1657.3,545.3 1665.5,556.2 1670.0,562.0 C1674.5,567.8 1674.2,564.9 1678.0,570.0 C1681.8,575.1 1687.7,581.8 1693.0,592.6 C1698.3,603.4 1704.6,622.9 1710.0,635.0 C1715.4,647.1 1720.1,652.2 1725.4,665.0 C1730.7,677.8 1738.2,701.2 1742.0,712.0 C1745.8,722.8 1747.4,724.8 1748.0,730.0 C1748.6,735.2 1748.4,734.6 1745.5,743.0 C1742.6,751.4 1733.5,772.6 1730.4,780.5 C1727.3,788.4 1731.6,789.0 1726.7,790.6 C1721.8,792.2 1708.0,798.8 1701.0,790.0 C1694.0,781.2 1687.4,750.0 1684.4,737.8 C1681.5,725.6 1685.2,724.6 1683.2,716.8 C1681.3,709.0 1677.0,700.5 1672.7,690.8 C1668.3,681.2 1662.3,670.3 1657.1,658.9 C1652.0,647.5 1646.9,631.8 1641.9,622.5 C1637.0,613.2 1633.8,612.3 1627.4,603.1 C1620.9,593.9 1610.4,578.5 1603.2,567.3 C1596.0,556.1 1591.2,546.1 1584.3,536.0 C1577.4,525.8 1570.2,516.2 1561.6,506.5 C1553.0,496.7 1544.9,487.5 1532.8,477.5 C1520.8,467.5 1501.8,454.1 1489.4,446.2 C1476.9,438.4 1469.8,435.6 1457.9,430.6 C1446.1,425.7 1431.4,419.5 1418.1,416.8 C1404.8,414.0 1394.6,413.9 1378.1,414.0 C1361.6,414.0 1328.8,426.2 1319.0,417.0 C1309.2,407.8 1309.2,368.9 1319.0,359.0 Z" fill="#c2c2c2"/>
<path d="M1379.4,364.0 C1387.5,364.6 1412.1,364.4 1428.4,367.8 C1444.6,371.2 1462.4,378.4 1477.0,384.4 C1491.5,390.4 1501.1,394.7 1515.8,403.8 C1530.4,412.9 1551.0,427.6 1564.9,439.1 C1578.7,450.7 1588.9,461.9 1599.0,473.3 C1609.1,484.7 1617.7,496.4 1625.4,507.5 C1633.1,518.7 1638.1,529.2 1645.3,540.3 C1652.4,551.5 1661.6,564.8 1668.4,574.6 C1675.2,584.3 1680.2,588.2 1686.0,598.8 C1691.7,609.4 1697.3,626.2 1702.7,638.3 C1708.2,650.4 1713.7,659.8 1718.6,671.2 C1723.6,682.5 1729.6,694.3 1732.2,706.6 C1734.7,719.0 1733.7,738.9 1734.0,745.4" stroke="#cdcdcd" stroke-width="12" fill="none"/>
<path d="M1378.8,371.0 C1386.8,371.6 1411.0,371.4 1426.9,374.7 C1442.8,378.0 1460.1,385.0 1474.3,390.9 C1488.5,396.7 1497.7,400.8 1512.1,409.7 C1526.4,418.7 1546.8,433.1 1560.4,444.5 C1574.0,455.9 1583.9,466.8 1593.8,477.9 C1603.7,489.1 1612.1,500.5 1619.7,511.5 C1627.3,522.6 1632.2,532.9 1639.4,544.1 C1646.5,555.3 1655.9,568.9 1662.7,578.6 C1669.4,588.2 1674.2,591.7 1679.8,602.1 C1685.4,612.5 1690.9,629.2 1696.3,641.2 C1701.7,653.1 1707.4,662.8 1712.2,673.9 C1717.0,685.1 1722.8,696.1 1725.3,708.1 C1727.8,720.0 1726.7,739.5 1727.0,745.7" stroke="#b3b3b3" stroke-width="1.5" fill="none"/>
<path d="M1376.4,400.9 C1383.8,401.4 1406.3,401.1 1420.8,404.0 C1435.2,407.0 1450.3,413.4 1462.9,418.6 C1475.5,423.8 1483.2,427.1 1496.2,435.2 C1509.3,443.4 1528.6,457.1 1541.2,467.5 C1553.7,478.0 1562.3,487.7 1571.3,497.8 C1580.3,508.0 1587.8,518.2 1595.0,528.6 C1602.1,539.0 1607.0,549.1 1614.1,560.3 C1621.3,571.5 1631.5,586.3 1638.0,595.7 C1644.6,605.0 1648.2,606.7 1653.4,616.3 C1658.5,626.0 1663.8,642.0 1669.0,653.5 C1674.2,665.1 1680.1,675.6 1684.6,685.7 C1689.1,695.8 1693.8,705.2 1695.9,714.2 C1698.1,723.1 1698.9,729.8 1697.3,739.4 C1695.8,749.1 1688.6,766.6 1686.9,772.1" stroke="#a3a3a3" stroke-width="5" fill="none"/>
<path d="M1375.9,406.8 C1383.2,407.3 1405.4,407.0 1419.5,409.9 C1433.6,412.8 1448.4,419.1 1460.6,424.2 C1472.9,429.2 1480.3,432.3 1493.1,440.3 C1505.8,448.3 1525.0,461.9 1537.3,472.1 C1549.6,482.4 1558.0,491.8 1566.8,501.8 C1575.6,511.8 1583.0,521.7 1590.0,532.0 C1597.1,542.3 1601.9,552.4 1609.1,563.5 C1616.3,574.7 1626.6,589.8 1633.1,599.1 C1639.6,608.4 1643.0,609.7 1648.1,619.2 C1653.2,628.7 1658.4,644.5 1663.5,656.0 C1668.7,667.5 1674.7,678.2 1679.1,688.1 C1683.5,698.0 1688.0,706.9 1690.1,715.4 C1692.1,723.8 1692.9,729.5 1691.4,738.7 C1689.9,747.8 1682.9,765.1 1681.2,770.3" stroke="#bfbfbf" stroke-width="5" fill="none"/>
<g filter="url(#sblur)"><path d="M1375.1,417.8 C1382.1,418.3 1403.7,417.9 1417.3,420.7 C1430.8,423.4 1444.8,429.5 1456.4,434.3 C1468.1,439.2 1474.9,441.9 1487.2,449.6 C1499.5,457.3 1518.4,470.7 1530.3,480.6 C1542.1,490.5 1550.1,499.5 1558.6,509.1 C1567.0,518.7 1574.1,528.2 1581.0,538.3 C1587.9,548.3 1592.6,558.3 1599.8,569.5 C1607.0,580.7 1617.7,596.2 1624.1,605.4 C1630.5,614.5 1633.5,615.2 1638.4,624.4 C1643.3,633.6 1648.4,649.2 1653.5,660.5 C1658.6,671.9 1664.7,682.9 1669.0,692.4 C1673.3,701.9 1677.4,710.1 1679.3,717.6 C1681.2,725.1 1681.9,729.0 1680.5,737.3 C1679.0,745.6 1672.3,762.2 1670.6,767.2" stroke="#000" stroke-width="6" fill="none" opacity="0.08"/></g>
<path d="M1378.1,414.0 C1384.7,414.4 1404.8,414.0 1418.1,416.8 C1431.4,419.5 1446.1,425.7 1457.9,430.6 C1469.8,435.6 1476.9,438.4 1489.4,446.2 C1501.8,454.1 1520.8,467.5 1532.8,477.5 C1544.9,487.5 1553.0,496.7 1561.6,506.5 C1570.2,516.2 1577.4,525.8 1584.3,536.0 C1591.2,546.1 1596.0,556.1 1603.2,567.3 C1610.4,578.5 1620.9,593.9 1627.4,603.1 C1633.8,612.3 1637.0,613.2 1641.9,622.5 C1646.9,631.8 1652.0,647.5 1657.1,658.9 C1662.3,670.3 1668.3,681.2 1672.7,690.8 C1677.0,700.5 1681.3,709.0 1683.2,716.8 C1685.2,724.6 1684.2,734.3 1684.4,737.8" stroke="#a9a9a9" stroke-width="2" fill="none"/>
<path d="M1442,372 L1439,398" stroke="#9c9c9c" stroke-width="2.5"/>
<path d="M1444,373 L1441,399" stroke="#d4d4d4" stroke-width="1.5"/>
<path d="M1600,483 L1590,497" stroke="#9c9c9c" stroke-width="2.5"/>
<path d="M1602,484 L1592,498" stroke="#d4d4d4" stroke-width="1.5"/>
<path d="M1705,628 L1683,640" stroke="#9c9c9c" stroke-width="2.5"/>
<path d="M1707,629 L1685,641" stroke="#d4d4d4" stroke-width="1.5"/>
<path d="M1548,420 L1522,446" stroke="#9c9c9c" stroke-width="2.5"/>
<path d="M1550,421 L1524,447" stroke="#d4d4d4" stroke-width="1.5"/>
<path d="M1668,560 L1640,578" stroke="#9c9c9c" stroke-width="2.5"/>
<path d="M1670,561 L1642,579" stroke="#d4d4d4" stroke-width="1.5"/>
<path d="M1744,712 L1712,728" stroke="#9c9c9c" stroke-width="2.5"/>
<path d="M1746,713 L1714,729" stroke="#d4d4d4" stroke-width="1.5"/>
<circle cx="1392" cy="393" r="8" fill="#cbcbcb" stroke="#9d9d9d" stroke-width="1.8"/>
<circle cx="1390" cy="391" r="3.6" fill="#d6d6d6"/>
<circle cx="1536" cy="484" r="8.5" fill="#cbcbcb" stroke="#9d9d9d" stroke-width="1.8"/>
<circle cx="1534" cy="482" r="3.825" fill="#d6d6d6"/>
<circle cx="1555" cy="471" r="8" fill="#cbcbcb" stroke="#9d9d9d" stroke-width="1.8"/>
<circle cx="1553" cy="469" r="3.6" fill="#d6d6d6"/>
<circle cx="1641" cy="610" r="8" fill="#cbcbcb" stroke="#9d9d9d" stroke-width="1.8"/>
<circle cx="1639" cy="608" r="3.6" fill="#d6d6d6"/>
<circle cx="1661" cy="596" r="8" fill="#cbcbcb" stroke="#9d9d9d" stroke-width="1.8"/>
<circle cx="1659" cy="594" r="3.6" fill="#d6d6d6"/>
<circle cx="1708" cy="772" r="7.5" fill="#cbcbcb" stroke="#9d9d9d" stroke-width="1.8"/>
<circle cx="1706" cy="770" r="3.375" fill="#d6d6d6"/>
<circle cx="1725" cy="741" r="7.5" fill="#cbcbcb" stroke="#9d9d9d" stroke-width="1.8"/>
<circle cx="1723" cy="739" r="3.375" fill="#d6d6d6"/>
<circle cx="1326" cy="395" r="8" fill="#cbcbcb" stroke="#9d9d9d" stroke-width="1.8"/>
<circle cx="1324" cy="393" r="3.6" fill="#d6d6d6"/>
<path d="M1726.7,790.6 C1732.0,792.4 1731.3,795.2 1733.0,800.6 C1734.7,806.0 1736.3,816.4 1736.7,823.0 C1737.1,829.6 1737.0,832.7 1735.4,840.0 C1733.9,847.3 1731.0,857.8 1727.4,866.7 C1723.8,875.6 1718.9,886.0 1714.0,893.5 C1709.1,901.0 1701.1,908.0 1698.0,912.0 C1694.9,916.0 1700.2,911.7 1695.3,917.5 C1690.4,923.3 1678.8,936.8 1668.6,947.0 C1658.3,957.2 1647.2,967.4 1633.8,979.0 C1620.4,990.6 1596.0,1008.9 1588.0,1016.5 C1580.0,1024.1 1593.7,1018.8 1585.7,1024.5 C1577.7,1030.2 1556.5,1042.1 1540.0,1051.0 C1523.5,1059.9 1496.9,1072.2 1486.7,1078.0 C1476.5,1083.8 1487.0,1080.7 1478.7,1086.0 C1470.4,1091.3 1451.8,1102.6 1437.0,1109.6 C1422.2,1116.6 1404.0,1123.3 1390.0,1128.0 C1376.0,1132.7 1363.7,1135.9 1353.0,1137.7 C1342.3,1139.5 1332.5,1139.7 1326.0,1139.0 C1319.5,1138.3 1318.0,1136.9 1314.0,1133.7 C1310.0,1130.5 1305.1,1125.3 1302.0,1120.0 C1298.9,1114.7 1297.0,1106.4 1295.4,1101.6 C1293.9,1096.8 1294.0,1093.4 1292.7,1091.0 C1291.4,1088.6 1288.3,1089.0 1287.4,1087.0 C1286.5,1085.0 1287.0,1081.0 1287.4,1079.0 C1287.8,1077.0 1287.3,1072.6 1290.0,1075.0 C1292.7,1077.4 1297.8,1089.6 1303.4,1093.6 C1309.0,1097.6 1315.7,1098.6 1323.5,1099.0 C1331.3,1099.4 1336.6,1100.0 1350.0,1096.0 C1363.4,1092.0 1382.0,1084.5 1403.7,1075.0 C1425.4,1065.5 1459.8,1048.8 1480.0,1039.0 C1500.2,1029.2 1510.0,1024.8 1525.0,1016.0 C1540.0,1007.2 1555.0,997.0 1570.0,986.0 C1585.0,975.0 1601.2,961.3 1615.0,950.0 C1628.8,938.7 1642.2,928.8 1653.0,918.0 C1663.8,907.2 1672.8,896.0 1680.0,885.0 C1687.2,874.0 1692.0,862.8 1696.0,852.0 C1700.0,841.2 1703.2,830.3 1704.0,820.0 C1704.8,809.7 1697.2,794.9 1701.0,790.0 C1704.8,785.1 1721.4,788.8 1726.7,790.6 Z" fill="#bebebe"/>
<path d="M1701.0,790.0 C1701.5,795.0 1704.8,809.7 1704.0,820.0 C1703.2,830.3 1700.0,841.2 1696.0,852.0 C1692.0,862.8 1687.2,874.0 1680.0,885.0 C1672.8,896.0 1663.8,907.2 1653.0,918.0 C1642.2,928.8 1628.8,938.7 1615.0,950.0 C1601.2,961.3 1585.0,975.0 1570.0,986.0 C1555.0,997.0 1540.0,1007.2 1525.0,1016.0 C1510.0,1024.8 1500.2,1029.2 1480.0,1039.0 C1459.8,1048.8 1425.4,1065.5 1403.7,1075.0 C1382.0,1084.5 1363.4,1092.0 1350.0,1096.0 C1336.6,1100.0 1331.3,1099.4 1323.5,1099.0 C1315.7,1098.6 1306.8,1094.5 1303.4,1093.6" stroke="#a6a6a6" stroke-width="2.5" fill="none"/>
<path d="M1697.0,786.0 C1697.5,791.0 1700.8,805.7 1700.0,816.0 C1699.2,826.3 1696.0,837.2 1692.0,848.0 C1688.0,858.8 1683.2,870.0 1676.0,881.0 C1668.8,892.0 1659.8,903.2 1649.0,914.0 C1638.2,924.8 1624.8,934.7 1611.0,946.0 C1597.2,957.3 1581.0,971.0 1566.0,982.0 C1551.0,993.0 1536.0,1003.2 1521.0,1012.0 C1506.0,1020.8 1496.2,1025.2 1476.0,1035.0 C1455.8,1044.8 1412.4,1065.0 1399.7,1071.0" stroke="#d0d0d0" stroke-width="2" fill="none"/>
<path d="M1584,1018 L1570,1000" stroke="#9c9c9c" stroke-width="2"/>
<path d="M1695,914 L1680,900" stroke="#9c9c9c" stroke-width="2"/>
<path d="M1480,1082 L1470,1063" stroke="#9c9c9c" stroke-width="2"/>
<path d="M1445,1092 L1437,1076" stroke="#9c9c9c" stroke-width="2"/>
<path d="M1400,1106 L1395,1092" stroke="#9c9c9c" stroke-width="2"/>
<path d="M1344,1122 L1330,1100 L1300,1098" stroke="#a0a0a0" stroke-width="2" fill="none"/>
<rect x="1318" y="1110" width="28" height="20" fill="#bababa" transform="rotate(15 1332 1120)"/>
<path d="M1300.0,590.0 C1305.0,591.3 1315.5,592.8 1330.0,598.0 C1344.5,603.2 1369.9,606.9 1387.0,621.5 C1404.1,636.1 1423.8,667.5 1432.6,685.7 C1441.4,704.0 1440.8,714.1 1440.0,731.0 C1439.2,747.9 1436.8,769.7 1428.0,787.0 C1419.2,804.3 1402.7,825.2 1387.0,835.0 C1371.3,844.8 1347.7,844.8 1334.0,846.0 C1320.3,847.2 1309.8,842.7 1305.0,842.0" stroke="#a4a4a4" stroke-width="6" fill="none"/>
<path d="M1307.0,590.0 C1312.0,591.7 1322.5,594.4 1337.0,600.0 C1351.5,605.6 1376.9,608.9 1394.0,623.5 C1411.1,638.1 1430.8,669.5 1439.6,687.7 C1448.4,706.0 1447.8,716.1 1447.0,733.0 C1446.2,749.9 1443.8,771.7 1435.0,789.0 C1426.2,806.3 1409.7,827.2 1394.0,837.0 C1378.3,846.8 1354.7,846.8 1341.0,848.0 C1327.3,849.2 1316.8,844.7 1312.0,844.0" stroke="#cacaca" stroke-width="4" fill="none"/>
<ellipse cx="1395" cy="650" rx="14" ry="12" fill="#c4c4c4" stroke="#8f8f8f" stroke-width="2" transform="rotate(0 1395 650)"/>
<ellipse cx="1405" cy="705" rx="20" ry="28" fill="#c4c4c4" stroke="#8f8f8f" stroke-width="2" transform="rotate(-20 1405 705)"/>
<ellipse cx="1375" cy="775" rx="18" ry="14" fill="#c4c4c4" stroke="#8f8f8f" stroke-width="2" transform="rotate(20 1375 775)"/>
<ellipse cx="1400" cy="810" rx="16" ry="12" fill="#c4c4c4" stroke="#8f8f8f" stroke-width="2" transform="rotate(0 1400 810)"/>
<ellipse cx="1360" cy="830" rx="40" ry="14" fill="#c4c4c4" stroke="#8f8f8f" stroke-width="2" transform="rotate(-40 1360 830)"/>
<path d="M1290,918 L1330,913 L1395,916 L1397,1075 L1300,1090 L1288,1000 Z" fill="#ababab"/>
<path d="M1290,930 Q1300,915 1336,916 L1338,985 L1292,985 Z" fill="#c4c4c4" stroke="#959595" stroke-width="1.5"/>
<path d="M1292,930 H1334" stroke="#9a9a9a" stroke-width="2"/>
<path d="M1292,944 H1334" stroke="#9a9a9a" stroke-width="2"/>
<path d="M1292,958 H1334" stroke="#9a9a9a" stroke-width="2"/>
<path d="M1292,972 H1334" stroke="#9a9a9a" stroke-width="2"/>
<circle cx="1311" cy="991" r="21" fill="#cbcbcb" stroke="#969696" stroke-width="1.5"/>
<rect x="1303" y="1011" width="22" height="55" fill="#c2c2c2" stroke="#979797" stroke-width="1.5"/>
<rect x="1335" y="996" width="28" height="86" rx="8" fill="#c8c8c8" stroke="#979797" stroke-width="1.5"/>
<circle cx="1378" cy="965" r="30" fill="none" stroke="#a4a4a4" stroke-width="5" stroke-dasharray="3.5 3"/>
<circle cx="1354" cy="967" r="31" fill="#c6c6c6" stroke="#939393" stroke-width="2"/>
<circle cx="1354" cy="967" r="22" fill="none" stroke="#9a9a9a" stroke-width="2.2"/>
<circle cx="1353" cy="965.8" r="22" fill="none" stroke="#d3d3d3" stroke-width="1.2"/>
<circle cx="1354" cy="967" r="13" fill="none" stroke="#9a9a9a" stroke-width="2.2"/>
<circle cx="1353" cy="965.8" r="13" fill="none" stroke="#d3d3d3" stroke-width="1.2"/>
<circle cx="1354" cy="967" r="5" fill="none" stroke="#9a9a9a" stroke-width="2.2"/>
<circle cx="1353" cy="965.8" r="5" fill="none" stroke="#d3d3d3" stroke-width="1.2"/>
<path d="M1395,916 V1072" stroke="#a0a0a0" stroke-width="3"/>
<circle cx="1408" cy="1056" r="8" fill="#c9c9c9" stroke="#999" stroke-width="1.8"/>
<circle cx="1398" cy="859" r="8" fill="none" stroke="#a0a0a0" stroke-width="1.8"/>
<ellipse cx="1322" cy="1075" rx="10" ry="14" fill="#c8c8c8" stroke="#999" stroke-width="1.5"/>
<ellipse cx="1360" cy="1080" rx="16" ry="10" fill="#c8c8c8" stroke="#999" stroke-width="1.5"/>
<path d="M1305,842 Q1300,880 1330,912" stroke="#d0d0d0" stroke-width="5" fill="none"/>
<path d="M1310,845 Q1310,880 1336,905" stroke="#a8a8a8" stroke-width="2" fill="none"/>
<path d="M1130.0,306.0 C1133.3,304.3 1136.4,303.6 1141.7,308.4 C1147.0,313.2 1161.8,335.0 1161.8,335.0 C1161.8,335.0 1187.5,346.5 1200.0,353.5 C1212.5,360.5 1226.1,369.2 1237.0,377.0 C1247.9,384.8 1258.2,393.3 1265.4,400.0 C1272.6,406.7 1277.6,411.1 1280.4,417.0 C1283.2,422.9 1283.7,429.0 1282.0,435.4 C1280.3,441.8 1276.6,450.1 1270.4,455.4 C1264.2,460.7 1254.5,464.6 1245.0,467.0 C1235.5,469.4 1223.3,471.0 1213.6,469.6 C1203.9,468.2 1196.0,465.1 1186.8,458.8 C1177.6,452.5 1165.6,442.3 1158.4,432.0 C1151.2,421.7 1147.3,409.5 1143.4,397.0 C1139.5,384.5 1138.6,369.9 1135.0,356.8 C1131.4,343.7 1122.5,326.9 1121.7,318.4 C1120.9,309.9 1126.7,307.7 1130.0,306.0 Z" fill="url(#earg)"/>
<ellipse cx="1222" cy="442" rx="58" ry="26" fill="url(#eardark)" transform="rotate(22 1222 442)"/>
<path d="M1158.4,432.0 C1163.1,436.5 1177.6,452.5 1186.8,458.8 C1196.0,465.1 1203.9,468.2 1213.6,469.6 C1223.3,471.0 1235.5,469.4 1245.0,467.0 C1254.5,464.6 1264.2,460.7 1270.4,455.4 C1276.6,450.1 1280.1,438.7 1282.0,435.4" stroke="#9a9a9a" stroke-width="2" fill="none"/>
<path d="M1180.0,468.0 C1185.8,470.0 1203.3,478.3 1215.0,480.0 C1226.7,481.7 1238.5,481.7 1250.0,478.0 C1261.5,474.3 1278.3,461.3 1284.0,458.0" stroke="#a2a2a2" stroke-width="2.5" fill="none"/>
<path d="M1178.0,474.0 C1184.2,476.0 1203.0,484.3 1215.0,486.0 C1227.0,487.7 1238.2,487.7 1250.0,484.0 C1261.8,480.3 1280.0,467.3 1286.0,464.0" stroke="#cfcfcf" stroke-width="2" fill="none"/>
<path d="M1195.0,484.0 C1200.8,485.3 1218.3,491.3 1230.0,492.0 C1241.7,492.7 1255.3,490.7 1265.0,488.0 C1274.7,485.3 1284.2,478.0 1288.0,476.0" stroke="#a2a2a2" stroke-width="2" fill="none"/>
<path d="M1139.0,398.0 C1136.2,401.7 1126.5,411.3 1122.0,420.0 C1117.5,428.7 1114.0,438.3 1112.0,450.0 C1110.0,461.7 1109.8,479.2 1110.0,490.0 C1110.2,500.8 1112.5,510.8 1113.0,515.0" stroke="#cbcbcb" stroke-width="12" fill="none"/>
<path d="M1150.0,402.0 C1146.7,406.3 1134.7,418.3 1130.0,428.0 C1125.3,437.7 1123.5,448.0 1122.0,460.0 C1120.5,472.0 1121.3,490.0 1121.0,500.0 C1120.7,510.0 1120.2,516.7 1120.0,520.0" stroke="#a9a9a9" stroke-width="2" fill="none"/>
<path d="M1139.0,398.0 C1135.5,402.5 1123.2,415.5 1118.0,425.0 C1112.8,434.5 1110.0,443.3 1108.0,455.0 C1106.0,466.7 1106.3,488.3 1106.0,495.0" stroke="#d2d2d2" stroke-width="2" fill="none"/>
<path d="M1135.0,356.8 C1136.4,363.5 1139.5,384.5 1143.4,397.0 C1147.3,409.5 1155.9,426.2 1158.4,432.0" stroke="#a6a6a6" stroke-width="2" fill="none"/>
<path d="M1162.0,336.0 C1168.3,338.9 1187.5,346.7 1200.0,353.5 C1212.5,360.3 1226.1,369.2 1237.0,377.0 C1247.9,384.8 1258.2,393.3 1265.4,400.0 C1272.6,406.7 1277.9,414.2 1280.4,417.0" stroke="#b0b0b0" stroke-width="1.5" fill="none"/>
<path d="M1210.0,362.0 C1216.7,362.3 1236.5,362.3 1250.0,364.0 C1263.5,365.7 1284.2,370.7 1291.0,372.0" stroke="#a6a6a6" stroke-width="2" fill="none"/>
<path d="M1225.0,378.0 C1230.8,379.0 1249.0,381.7 1260.0,384.0 C1271.0,386.3 1285.8,390.7 1291.0,392.0" stroke="#a6a6a6" stroke-width="2" fill="none"/>
<path d="M1305.0,356.0 C1304.7,371.7 1304.2,419.3 1303.0,450.0 C1301.8,480.7 1298.8,525.0 1298.0,540.0" stroke="#9b9b9b" stroke-width="29" fill="none" stroke-linecap="butt"/>
<path d="M1305.0,356.0 C1304.7,371.7 1304.2,419.3 1303.0,450.0 C1301.8,480.7 1298.8,525.0 1298.0,540.0" stroke="#c9c9c9" stroke-width="26" fill="none" stroke-linecap="butt"/>
<path d="M1146.0,447.0 C1155.8,454.2 1185.7,473.5 1205.0,490.0 C1224.3,506.5 1252.5,536.7 1262.0,546.0" stroke="#9b9b9b" stroke-width="31" fill="none" stroke-linecap="butt"/>
<path d="M1146.0,447.0 C1155.8,454.2 1185.7,473.5 1205.0,490.0 C1224.3,506.5 1252.5,536.7 1262.0,546.0" stroke="#c6c6c6" stroke-width="28" fill="none" stroke-linecap="butt"/>
<path d="M1305.0,610.0 C1307.2,616.7 1314.2,640.0 1318.0,650.0 C1321.8,660.0 1326.3,666.7 1328.0,670.0" stroke="#9b9b9b" stroke-width="25" fill="none" stroke-linecap="butt"/>
<path d="M1305.0,610.0 C1307.2,616.7 1314.2,640.0 1318.0,650.0 C1321.8,660.0 1326.3,666.7 1328.0,670.0" stroke="#c6c6c6" stroke-width="22" fill="none" stroke-linecap="butt"/>
<path d="M1122.0,770.0 C1135.0,758.3 1174.5,721.7 1200.0,700.0 C1225.5,678.3 1262.5,650.0 1275.0,640.0" stroke="#9b9b9b" stroke-width="29" fill="none" stroke-linecap="butt"/>
<path d="M1122.0,770.0 C1135.0,758.3 1174.5,721.7 1200.0,700.0 C1225.5,678.3 1262.5,650.0 1275.0,640.0" stroke="#c6c6c6" stroke-width="26" fill="none" stroke-linecap="butt"/>
<g filter="url(#sblur)"><path d="M1055,805 L1120,775 L1205,742 L1175,792 L1085,832 Z" fill="#000" opacity="0.09"/></g>
<path d="M942.0,832.0 C944.7,825.3 951.3,806.5 958.0,792.0 C964.7,777.5 971.7,763.0 982.0,745.0 C992.3,727.0 1013.7,694.2 1020.0,684.0" stroke="#9b9b9b" stroke-width="17" fill="none" stroke-linecap="butt"/>
<path d="M942.0,832.0 C944.7,825.3 951.3,806.5 958.0,792.0 C964.7,777.5 971.7,763.0 982.0,745.0 C992.3,727.0 1013.7,694.2 1020.0,684.0" stroke="#c7c7c7" stroke-width="14" fill="none" stroke-linecap="butt"/>
<path d="M962.0,758.0 C968.3,765.0 986.2,784.3 1000.0,800.0 C1013.8,815.7 1037.5,843.3 1045.0,852.0" stroke="#9b9b9b" stroke-width="29" fill="none" stroke-linecap="butt"/>
<path d="M962.0,758.0 C968.3,765.0 986.2,784.3 1000.0,800.0 C1013.8,815.7 1037.5,843.3 1045.0,852.0" stroke="#c6c6c6" stroke-width="26" fill="none" stroke-linecap="butt"/>
<path d="M1078.0,836.0 C1091.7,831.0 1132.2,816.7 1160.0,806.0 C1187.8,795.3 1230.8,777.7 1245.0,772.0" stroke="#a0a0a0" stroke-width="25" fill="none" stroke-linecap="butt"/>
<path d="M1078.0,836.0 C1091.7,831.0 1132.2,816.7 1160.0,806.0 C1187.8,795.3 1230.8,777.7 1245.0,772.0" stroke="#cacaca" stroke-width="22" fill="none" stroke-linecap="butt"/>
<path d="M1080,830 L1245,765" stroke="#d6d6d6" stroke-width="4" fill="none"/>
<path d="M1083.0,861.0 C1096.7,856.7 1138.0,843.8 1165.0,835.0 C1192.0,826.2 1231.7,812.5 1245.0,808.0" stroke="#a0a0a0" stroke-width="23" fill="none" stroke-linecap="butt"/>
<path d="M1083.0,861.0 C1096.7,856.7 1138.0,843.8 1165.0,835.0 C1192.0,826.2 1231.7,812.5 1245.0,808.0" stroke="#c4c4c4" stroke-width="20" fill="none" stroke-linecap="butt"/>
<path d="M1085,856 L1245,802" stroke="#d2d2d2" stroke-width="3" fill="none"/>
<path d="M1068.0,874.0 C1073.3,875.0 1089.3,878.3 1100.0,880.0 C1110.7,881.7 1126.7,883.3 1132.0,884.0" stroke="#9b9b9b" stroke-width="18" fill="none" stroke-linecap="butt"/>
<path d="M1068.0,874.0 C1073.3,875.0 1089.3,878.3 1100.0,880.0 C1110.7,881.7 1126.7,883.3 1132.0,884.0" stroke="#c6c6c6" stroke-width="15" fill="none" stroke-linecap="butt"/>
<g filter="url(#sblur)"><path d="M1045.0,625.0 C1050.8,624.5 1062.5,621.5 1080.0,622.0 C1097.5,622.5 1128.0,629.7 1150.0,628.0 C1172.0,626.3 1201.7,614.7 1212.0,612.0" stroke="#000" stroke-width="10" fill="none" opacity="0.18"/></g>
<path d="M1040.0,610.0 C1040.8,604.2 1042.5,597.0 1050.0,590.0 C1057.5,583.0 1071.7,572.7 1085.0,568.0 C1098.3,563.3 1115.0,561.2 1130.0,562.0 C1145.0,562.8 1161.7,567.3 1175.0,573.0 C1188.3,578.7 1205.0,589.2 1210.0,596.0 C1215.0,602.8 1215.0,609.7 1205.0,614.0 C1195.0,618.3 1171.7,621.8 1150.0,622.0 C1128.3,622.2 1092.5,614.5 1075.0,615.0 C1057.5,615.5 1050.8,625.8 1045.0,625.0 C1039.2,624.2 1039.2,615.8 1040.0,610.0 Z" fill="#c9c9c9"/>
<path d="M1045.0,623.0 C1050.0,621.2 1057.5,612.5 1075.0,612.0 C1092.5,611.5 1127.2,621.0 1150.0,620.0 C1172.8,619.0 1201.7,608.3 1212.0,606.0" stroke="#a3a3a3" stroke-width="2.5" fill="none"/>
<path d="M1050.0,592.0 C1055.8,588.3 1071.7,574.7 1085.0,570.0 C1098.3,565.3 1115.0,563.2 1130.0,564.0 C1145.0,564.8 1162.3,569.7 1175.0,575.0 C1187.7,580.3 1200.8,592.5 1206.0,596.0" stroke="#d6d6d6" stroke-width="3" fill="none"/>
<path d="M1070.0,630.0 C1075.3,625.7 1088.3,622.3 1100.0,622.0 C1111.7,621.7 1131.3,623.7 1140.0,628.0 C1148.7,632.3 1151.7,638.7 1152.0,648.0 C1152.3,657.3 1149.8,676.7 1142.0,684.0 C1134.2,691.3 1115.7,693.7 1105.0,692.0 C1094.3,690.3 1084.2,681.3 1078.0,674.0 C1071.8,666.7 1069.3,655.3 1068.0,648.0 C1066.7,640.7 1064.7,634.3 1070.0,630.0 Z" fill="#b2b2b2" stroke="#9b9b9b" stroke-width="2.5"/>
<path d="M1085.0,645.0 C1088.5,640.5 1097.5,636.2 1105.0,636.0 C1112.5,635.8 1124.8,639.7 1130.0,644.0 C1135.2,648.3 1137.3,656.5 1136.0,662.0 C1134.7,667.5 1128.5,674.5 1122.0,677.0 C1115.5,679.5 1103.3,679.3 1097.0,677.0 C1090.7,674.7 1086.0,668.3 1084.0,663.0 C1082.0,657.7 1081.5,649.5 1085.0,645.0 Z" fill="#c8c8c8" stroke="#9c9c9c" stroke-width="2"/>
<path d="M1080,642 Q1110,626 1146,648" stroke="#8f8f8f" stroke-width="3.5" fill="none"/>
<path d="M1080,690 Q1110,700 1150,688" stroke="#d0d0d0" stroke-width="3" fill="none"/>
<ellipse cx="946" cy="889" rx="13" ry="23" fill="#7f7f7f" transform="rotate(-12 946 889)"/>
<ellipse cx="950" cy="893" rx="8" ry="15" fill="#686868" transform="rotate(-12 950 893)"/>
<path d="M935,858 Q960,850 975,870 Q985,900 965,925" stroke="#a8a8a8" stroke-width="3" fill="none"/>
<path d="M1015,930 Q1030,920 1045,928 L1030,968 Q1018,962 1015,945 Z" fill="#a9a9a9" stroke="#8a8a8a" stroke-width="1.5"/>
<path d="M1020,935 L1036,932" stroke="#8c8c8c" stroke-width="1.5"/>
<path d="M1020,945 L1036,942" stroke="#8c8c8c" stroke-width="1.5"/>
<path d="M1020,955 L1036,952" stroke="#8c8c8c" stroke-width="1.5"/>
<path d="M960,960 Q1000,945 1012,935" stroke="#a6a6a6" stroke-width="2" fill="none"/>
<path d="M1035,985 Q1070,975 1090,930" stroke="#a9a9a9" stroke-width="2" fill="none"/>
<circle cx="1291" cy="577" r="40" fill="#9a9a9a"/>
<circle cx="1291" cy="577" r="38" fill="#c8c8c8"/>
<circle cx="1291" cy="577" r="28" fill="none" stroke="#9c9c9c" stroke-width="2.5"/>
<circle cx="1290" cy="575.5" r="28" fill="none" stroke="#d6d6d6" stroke-width="1.5"/>
<circle cx="1291" cy="577" r="18" fill="none" stroke="#9c9c9c" stroke-width="2.5"/>
<circle cx="1290" cy="575.5" r="18" fill="none" stroke="#d6d6d6" stroke-width="1.5"/>
<circle cx="1291" cy="577" r="8" fill="none" stroke="#9c9c9c" stroke-width="2.5"/>
<circle cx="1290" cy="575.5" r="8" fill="none" stroke="#d6d6d6" stroke-width="1.5"/>
<circle cx="1313" cy="717" r="70" fill="none" stroke="#a8a8a8" stroke-width="5" stroke-dasharray="4 4"/>
<circle cx="1313" cy="717" r="69" fill="#9a9a9a"/>
<circle cx="1313" cy="717" r="67" fill="#c8c8c8"/>
<circle cx="1313" cy="717" r="50" fill="none" stroke="#9c9c9c" stroke-width="2.5"/>
<circle cx="1312" cy="715.5" r="50" fill="none" stroke="#d6d6d6" stroke-width="1.5"/>
<circle cx="1313" cy="717" r="36" fill="none" stroke="#9c9c9c" stroke-width="2.5"/>
<circle cx="1312" cy="715.5" r="36" fill="none" stroke="#d6d6d6" stroke-width="1.5"/>
<circle cx="1313" cy="717" r="24" fill="none" stroke="#9c9c9c" stroke-width="2.5"/>
<circle cx="1312" cy="715.5" r="24" fill="none" stroke="#d6d6d6" stroke-width="1.5"/>
<circle cx="1313" cy="717" r="12" fill="none" stroke="#9c9c9c" stroke-width="2.5"/>
<circle cx="1312" cy="715.5" r="12" fill="none" stroke="#d6d6d6" stroke-width="1.5"/>
<circle cx="1313" cy="717" r="50" fill="#bebebe" opacity="0.6"/>
<circle cx="1313" cy="717" r="36" fill="none" stroke="#9a9a9a" stroke-width="2.5"/>
<circle cx="1312" cy="715.5" r="36" fill="none" stroke="#d4d4d4" stroke-width="1.5"/>
<circle cx="1313" cy="717" r="24" fill="none" stroke="#9a9a9a" stroke-width="2.5"/>
<circle cx="1312" cy="715.5" r="24" fill="none" stroke="#d4d4d4" stroke-width="1.5"/>
<circle cx="1313" cy="717" r="12" fill="none" stroke="#9a9a9a" stroke-width="2.5"/>
<circle cx="1312" cy="715.5" r="12" fill="none" stroke="#d4d4d4" stroke-width="1.5"/>
<circle cx="1055" cy="863" r="29" fill="#9a9a9a"/>
<circle cx="1055" cy="863" r="27" fill="#c8c8c8"/>
<circle cx="1055" cy="863" r="18" fill="none" stroke="#9c9c9c" stroke-width="2.5"/>
<circle cx="1054" cy="861.5" r="18" fill="none" stroke="#d6d6d6" stroke-width="1.5"/>
<circle cx="1055" cy="863" r="9" fill="none" stroke="#9c9c9c" stroke-width="2.5"/>
<circle cx="1054" cy="861.5" r="9" fill="none" stroke="#d6d6d6" stroke-width="1.5"/>
<circle cx="1268" cy="509" r="13" fill="#9a9a9a"/>
<circle cx="1268" cy="509" r="11" fill="#c8c8c8"/>
<circle cx="1268" cy="509" r="6" fill="none" stroke="#9c9c9c" stroke-width="2.5"/>
<circle cx="1267" cy="507.5" r="6" fill="none" stroke="#d6d6d6" stroke-width="1.5"/>
<circle cx="1297" cy="526" r="6" fill="#cdcdcd" stroke="#989898" stroke-width="1.8"/>
<circle cx="1297" cy="526" r="2" fill="#a0a0a0"/>
<circle cx="1168" cy="690" r="6" fill="#cdcdcd" stroke="#989898" stroke-width="1.8"/>
<circle cx="1168" cy="690" r="2" fill="#a0a0a0"/>
<circle cx="1133" cy="766" r="6" fill="#cdcdcd" stroke="#989898" stroke-width="1.8"/>
<circle cx="1133" cy="766" r="2" fill="#a0a0a0"/>
<circle cx="1211" cy="708" r="6" fill="#cdcdcd" stroke="#989898" stroke-width="1.8"/>
<circle cx="1211" cy="708" r="2" fill="#a0a0a0"/>
<circle cx="1245" cy="650" r="6" fill="#cdcdcd" stroke="#989898" stroke-width="1.8"/>
<circle cx="1245" cy="650" r="2" fill="#a0a0a0"/>
<circle cx="973" cy="776" r="6" fill="#cdcdcd" stroke="#989898" stroke-width="1.8"/>
<circle cx="973" cy="776" r="2" fill="#a0a0a0"/>
<circle cx="1110" cy="895" r="6" fill="#cdcdcd" stroke="#989898" stroke-width="1.8"/>
<circle cx="1110" cy="895" r="2" fill="#a0a0a0"/>
<circle cx="1403" cy="650" r="6" fill="#cdcdcd" stroke="#989898" stroke-width="1.8"/>
<circle cx="1403" cy="650" r="2" fill="#a0a0a0"/>
<circle cx="1382" cy="1040" r="6" fill="#cdcdcd" stroke="#989898" stroke-width="1.8"/>
<circle cx="1382" cy="1040" r="2" fill="#a0a0a0"/>
<circle cx="1460" cy="694" r="6" fill="none" stroke="#9c9c9c" stroke-width="1.8"/>
<circle cx="1400" cy="862" r="6" fill="none" stroke="#9c9c9c" stroke-width="1.8"/>
<circle cx="1610" cy="975" r="6" fill="none" stroke="#9c9c9c" stroke-width="1.8"/>
</g>
</svg>
<div id="act" class="abs"></div>
<div id="panel" class="abs"></div>
<div id="div1" class="abs"></div>
<div id="pill" class="abs"></div>
<div id="dd" class="abs"></div>
<div id="seg" class="abs"></div>
<div id="mid" class="abs"></div>
<div id="tog" class="abs"></div>
<div id="quad" class="abs"></div>
<div id="gen" class="abs"></div>
<svg width="1920" height="1197" style="position:absolute;left:0;top:0" fill="none" stroke-linecap="round" stroke-linejoin="round">
<defs>
<radialGradient id="lg1" cx="0.35" cy="0.3" r="0.75">
<stop offset="0" stop-color="#2f8df5"/><stop offset="1" stop-color="#1656d8"/>
</radialGradient>
</defs>
<!-- back chevron -->
<path d="M25,27.5 L17.5,34.5 L25,41.5" stroke="#fff" stroke-width="1.8"/>
<!-- logo -->
<circle cx="73.75" cy="34.6" r="23.3" fill="#1460e6"/>
<path d="M56.4,19.3 A23.25,23.25 0 0 1 83.5,13.9 C86,17 85.5,26 82.1,29.7 C79,33 76,34 73.1,35.1 C69,36.5 66,37.5 63.5,40.5 C60.5,44 61,50 65,55.8 C60,53 56.5,46 56.4,39.6 C56.3,35 57.5,31 61.3,28.3 C62.5,25 61,21 56.4,19.3 Z" fill="#b3dcf1"/>
<path d="M83.5,14.5 C87.5,17 90,21.5 90.2,27 C90.5,34 88,41 84.4,43.6 C81,45.5 76,45.5 73,42.5 C71,40.5 71.5,37 73.1,35.1 C76,34 79,33 82.1,29.7 C85.5,26 86,17 83.5,14.5 Z" fill="#2aaaf3"/>
<circle cx="57.9" cy="25.3" r="4.4" fill="#1460e6"/>
<path d="M83.8,15.5 C85.8,19 85.5,26 82.1,29.7 C79,33 76,34 73.1,35.1" stroke="#e8f6ff" stroke-width="1.1" fill="none" opacity="0.8"/>
<!-- sidebar icons -->
<g stroke="#a3a3a6" stroke-width="1.5">
 <g transform="translate(30,100)">
  <path d="M21.5,12.2 H14 Q11,12.2 11,15.2 V29 Q11,32 14,32 H28 Q31,32 31,29 V21.5"/>
  <path d="M13.6,25.4 L18.9,18 L23.5,22.4 L25,21 L27.9,25.4 Z"/>
  <path d="M27.9,12 Q28.4,14.8 31.2,15.3 Q28.4,15.8 27.9,18.6 Q27.4,15.8 24.6,15.3 Q27.4,14.8 27.9,12 Z" fill="#a3a3a6" stroke-width="0.8"/>
 </g>
 <g transform="translate(30,220)">
  <path d="M13.6,14.7 L8.6,29 H18.4 Z"/>
  <circle cx="24.1" cy="16.4" r="5"/>
  <rect x="21.7" y="24.6" width="10.8" height="7.6"/>
 </g>
 <g transform="translate(30,341)">
  <path d="M10.7,19.5 V14.7 L13.6,11.2 H31.6 V29 L28.7,32 H22.8 Z"/>
  <path d="M10.7,14.7 H28.7 V32 M28.7,14.7 L31.6,11.2"/>
  <path d="M10.7,23.5 V32.2 H19.8 Z"/>
 </g>
 <g transform="translate(30,580)">
  <path d="M12,12.7 H30 V30.9 H12 Z M12,12.7 L30,30.9 M30,12.7 L12,30.9"/>
  <circle cx="12" cy="12.7" r="1.4" fill="#a3a3a6"/><circle cx="30" cy="12.6" r="1.4" fill="#a3a3a6"/>
  <circle cx="12" cy="30.9" r="1.4" fill="#a3a3a6"/><circle cx="30" cy="30.9" r="1.4" fill="#a3a3a6"/>
 </g>
 <g transform="translate(30,698)">
  <path d="M10.7,10.7 H25 V17.3 H31.8 V32.4 H16.7 V25.4 H10.7 Z"/>
  <path d="M11.5,12 L30.8,31.3 M19.5,11 L31,22.5 M11,19.5 L22.5,31.3"/>
 </g>
 <g transform="translate(30,818)">
  <circle cx="20.8" cy="12.5" r="3"/>
  <path d="M9.4,22 Q21,16 32.5,22 M21,18.9 V25.4 L13.4,33.3 M21,25.4 L28.7,33.3"/>
 </g>
 <g transform="translate(30,960)">
  <circle cx="23.7" cy="12.7" r="3"/>
  <path d="M11.8,18.6 Q17,15.5 22,19.2 Q26,21.8 31.4,21.7 M21.5,19.5 Q20,26 15,28.2 Q12,29.5 9.2,29.4 M19.9,25.7 Q25.5,27 26.8,33.3"/>
 </g>
</g>
<g stroke="#ee8fc8" stroke-width="1.5" transform="translate(30,462)">
 <path d="M21,10.5 L9,26.8 L21,33.8 L33.3,27 Z M21,10.5 V33.8 M9,26.8 H33.3"/>
</g>
<!-- panel icons -->
<path d="M368.7,152.3 V144.5 M365.3,147.6 L368.7,144.2 L372.3,147.6 M362.5,151.5 V156 H375.4 V151.5" stroke="#fff" stroke-width="1.9"/>
<rect x="520.5" y="140.5" width="21" height="16" rx="2" stroke="#fff" stroke-width="1.9"/>
<path d="M527.5,140.5 V156.5" stroke="#fff" stroke-width="1.9"/>
<circle cx="298" cy="239.8" r="7" stroke="#fff" stroke-width="1.2"/>
<path d="M298,238.5 V243.8" stroke="#fff" stroke-width="1.5"/><circle cx="298" cy="235.5" r="0.9" fill="#fff" stroke="none"/>
<path d="M512,236 L518.5,242.5 L525,236" stroke="#fff" stroke-width="1.9"/>
<g transform="translate(165,475)" stroke="#b4b4b8" stroke-width="1.3">
 <path d="M16.4,7.6 L7.5,20.2 L16.4,25.6 L26,20.2 Z M16.4,7.6 V25.6 M7.5,20.2 H26"/>
</g>
<g transform="translate(364,473)" stroke="#b7bac4" stroke-width="1.3">
 <path d="M8.5,9.65 H19.9 V20.9 H8.5 Z M13.7,14.9 H25.1 V26 H13.7 Z M8.5,9.65 L13.7,14.9 M19.9,9.65 L25.1,14.9 M19.9,20.9 L25.1,26 M8.5,20.9 L13.7,26"/>
</g>
<g transform="translate(222,568)" fill="#fff" stroke="none">
 <path d="M16.4,8.4 Q17.3,14.8 23.7,15.7 Q17.3,16.6 16.4,23.1 Q15.5,16.6 9.2,15.7 Q15.5,14.8 16.4,8.4 Z"/>
 <path d="M25.6,20.4 L28.9,23.7 L25.6,27 L22.3,23.7 Z"/>
</g>
</svg>

<div id="newb" class="abs"></div>
<div class="t" id="t0" style="left:5.9px;top:149.4px;font-size:17.6px;line-height:21.1px;font-weight:400;color:#b1b1b4;letter-spacing:0.567px;">Concept</div>
<div class="t" id="t1" style="left:5.9px;top:169.6px;font-size:17.6px;line-height:21.1px;font-weight:400;color:#b1b1b4;letter-spacing:0.567px;">Design</div>
<div class="t" id="t2" style="left:5.9px;top:268.8px;font-size:17.6px;line-height:21.1px;font-weight:400;color:#b1b1b4;letter-spacing:0.538px;">Geometric</div>
<div class="t" id="t3" style="left:5.9px;top:289.1px;font-size:17.6px;line-height:21.1px;font-weight:400;color:#b1b1b4;letter-spacing:0.538px;">generation</div>
<div class="t" id="t4" style="left:2.5px;top:389.7px;font-size:17.6px;line-height:21.1px;font-weight:400;color:#b1b1b4;letter-spacing:0.526px;">Component</div>
<div class="t" id="t5" style="left:2.5px;top:409.1px;font-size:17.6px;line-height:21.1px;font-weight:400;color:#b1b1b4;letter-spacing:0.526px;">splitting</div>
<div class="t" id="t6" style="left:5.8px;top:511.5px;font-size:17.6px;line-height:21.1px;font-weight:400;color:#fff;letter-spacing:0.605px;">Low-mode</div>
<div class="t" id="t7" style="left:5.8px;top:530.3px;font-size:17.6px;line-height:21.1px;font-weight:400;color:#fff;letter-spacing:0.605px;">topology</div>
<div class="t" id="t8" style="left:6.4px;top:625.1px;font-size:17.6px;line-height:21.1px;font-weight:400;color:#b1b1b4;letter-spacing:0.605px;">UV</div>
<div class="t" id="t9" style="left:6.4px;top:645.1px;font-size:17.6px;line-height:21.1px;font-weight:400;color:#b1b1b4;letter-spacing:0.605px;">Exposure</div>
<div class="t" id="t10" style="left:6.4px;top:745.7px;font-size:17.6px;line-height:21.1px;font-weight:400;color:#b1b1b4;letter-spacing:0.605px;">Texture</div>
<div class="t" id="t11" style="left:6.4px;top:765.4px;font-size:17.6px;line-height:21.1px;font-weight:400;color:#b1b1b4;letter-spacing:0.605px;">drawing</div>
<div class="t" id="t12" style="left:5.8px;top:866.6px;font-size:17.6px;line-height:21.1px;font-weight:400;color:#b1b1b4;letter-spacing:0.605px;">Bone</div>
<div class="t" id="t13" style="left:5.8px;top:886.6px;font-size:17.6px;line-height:21.1px;font-weight:400;color:#b1b1b4;letter-spacing:0.605px;">binding</div>
<div class="t" id="t14" style="left:5.8px;top:906.9px;font-size:17.6px;line-height:21.1px;font-weight:400;color:#b1b1b4;letter-spacing:0.605px;">and skin</div>
<div class="t" id="t15" style="left:5.8px;top:1007.8px;font-size:17.6px;line-height:21.1px;font-weight:400;color:#b1b1b4;letter-spacing:0.605px;">Animation</div>
<div class="t" id="t16" style="left:5.8px;top:1027.6px;font-size:17.6px;line-height:21.1px;font-weight:400;color:#b1b1b4;letter-spacing:0.605px;">effects</div>
<div class="t" id="t17" style="left:159.4px;top:137.0px;font-size:20.6px;line-height:24.7px;font-weight:400;color:#fff;letter-spacing:0.557px;">Low-mode topology</div>
<div class="t" id="t18" style="left:380.8px;top:139.1px;font-size:18.5px;line-height:22.2px;font-weight:400;color:#fff;letter-spacing:-0.015px;">Local model</div>
<div class="t" id="t19" style="left:159.4px;top:227.3px;font-size:20.6px;line-height:24.7px;font-weight:400;color:#fff;letter-spacing:0.328px;">Select Model</div>
<div class="t" id="t20" style="left:334.0px;top:229.5px;font-size:18px;line-height:21.6px;font-weight:400;color:#fff;letter-spacing:0.328px;letter-spacing:-0.5px;word-spacing:1px;">低模拓扑 &#8211; V1.5</div>
<div class="t" id="t21" style="left:158.8px;top:293.0px;font-size:20.6px;line-height:24.7px;font-weight:400;color:#fff;letter-spacing:0.454px;">Model face count</div>
<div class="t" id="t22" style="left:203.8px;top:347.8px;font-size:20.6px;line-height:24.7px;font-weight:400;color:#fff;letter-spacing:-0.294px;">Low</div>
<div class="t" id="t23" style="left:317.7px;top:348.4px;font-size:20px;line-height:24.0px;font-weight:700;color:#fff;letter-spacing:0.141px;-webkit-text-stroke:0;">middle</div>
<div class="t" id="t24" style="left:458.3px;top:347.8px;font-size:20.6px;line-height:24.7px;font-weight:400;color:#fff;letter-spacing:0.441px;">high</div>
<div class="t" id="t25" style="left:159.4px;top:420.5px;font-size:20.6px;line-height:24.7px;font-weight:400;color:#fff;letter-spacing:0.481px;">Topology selection</div>
<div class="t" id="t26" style="left:199.0px;top:467.3px;font-size:20.6px;line-height:24.7px;font-weight:400;color:#9d9da1;letter-spacing:0.474px;">triangular</div>
<div class="t" id="t27" style="left:199.0px;top:491.3px;font-size:20.6px;line-height:24.7px;font-weight:400;color:#9d9da1;letter-spacing:0.474px;">facet</div>
<div class="t" id="t28" style="left:399.0px;top:479.9px;font-size:20px;line-height:24.0px;font-weight:700;color:#fff;letter-spacing:0.124px;-webkit-text-stroke:0;">Quadrilateral</div>
<div class="t" id="t29" style="left:263.8px;top:574.9px;font-size:20.6px;line-height:24.7px;font-weight:400;color:#fff;letter-spacing:0.427px;">Generate immediately</div>
<div class="t" id="t30" style="left:111.0px;top:13.7px;font-size:36px;line-height:43.2px;font-weight:700;color:#fff;letter-spacing:0.427px;-webkit-text-stroke:0;font-style:italic;transform:scaleX(0.80);transform-origin:0 0;letter-spacing:1.3px;">3D Studio</div>
<div class="t" id="t31" style="left:306.0px;top:214.7px;font-size:16px;line-height:19.2px;font-weight:700;color:#fff;letter-spacing:0.698px;-webkit-text-stroke:0;font-style:italic;">New</div>
<div class="t" id="t32" style="left:608.0px;top:157.8px;font-size:17.6px;line-height:21.1px;font-weight:400;color:#6f6f73;letter-spacing:0.595px;">Topology</div>
<div class="t" id="t33" style="left:684.2px;top:139.8px;font-size:18.5px;line-height:22.2px;font-weight:400;color:#fff;letter-spacing:0.716px;">triangular</div>
<div class="t" id="t34" style="left:684.2px;top:174.5px;font-size:18.5px;line-height:22.2px;font-weight:400;color:#fff;letter-spacing:0.716px;">facet</div>
<div class="t" id="t35" style="left:608.0px;top:222.4px;font-size:17.6px;line-height:21.1px;font-weight:400;color:#6f6f73;letter-spacing:0.524px;">Model face</div>
<div class="t" id="t36" style="left:608.0px;top:258.1px;font-size:17.6px;line-height:21.1px;font-weight:400;color:#6f6f73;letter-spacing:0.524px;">count</div>
<div class="t" id="t37" style="left:608.0px;top:305.6px;font-size:17.6px;line-height:21.1px;font-weight:400;color:#6f6f73;letter-spacing:0.524px;">Number of</div>
<div class="t" id="t38" style="left:608.0px;top:340.7px;font-size:17.6px;line-height:21.1px;font-weight:400;color:#6f6f73;letter-spacing:0.524px;">vertices</div>
<div class="t" id="t39" style="left:737.4px;top:240.1px;font-size:18.5px;line-height:22.2px;font-weight:400;color:#fff;letter-spacing:1.311px;">500000</div>
<div class="t" id="t40" style="left:738.4px;top:322.9px;font-size:18.5px;line-height:22.2px;font-weight:400;color:#fff;letter-spacing:1.144px;">328876</div>
</body></html>
